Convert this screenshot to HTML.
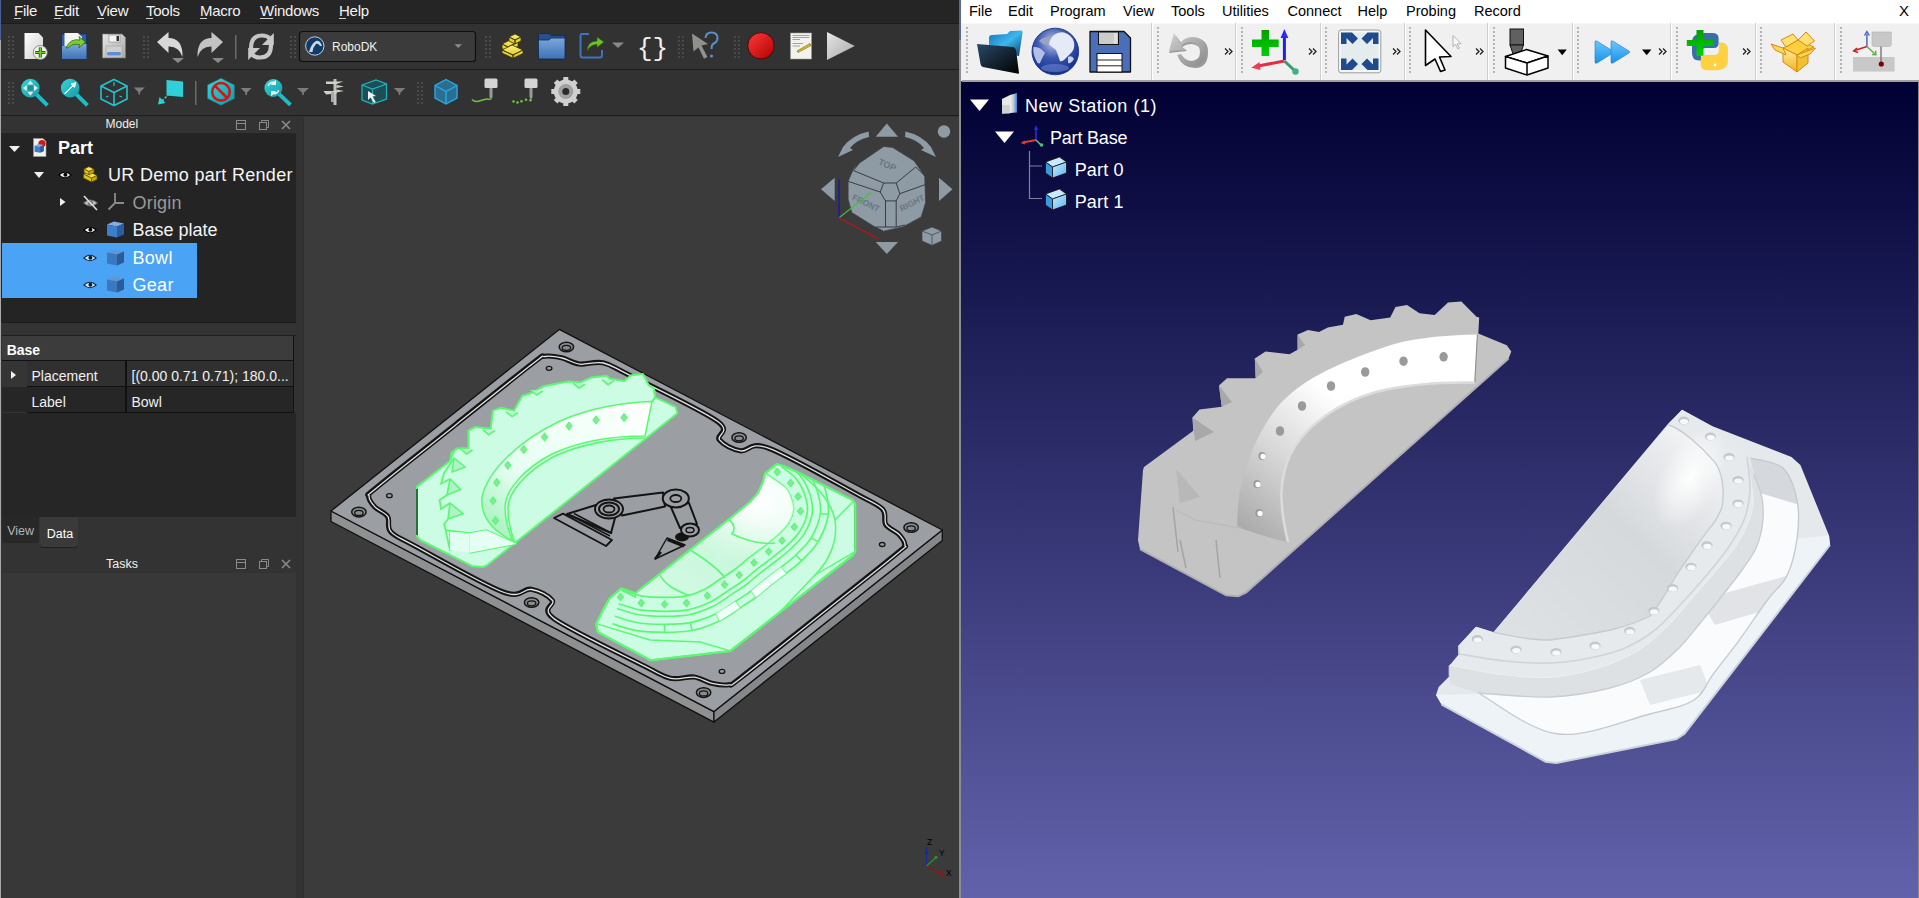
<!DOCTYPE html>
<html><head><meta charset="utf-8"><style>
html,body{margin:0;padding:0}
body{width:1919px;height:898px;overflow:hidden;position:relative;background:#3b3b3b;font-family:"Liberation Sans", sans-serif}
.t{position:absolute;line-height:1;white-space:pre}
.r{position:absolute}
svg{position:absolute;overflow:visible}
</style></head><body>
<div class="r" style="left:0px;top:0px;width:960px;height:898px;background:#3b3b3b;"></div><div class="r" style="left:0px;top:0px;width:960px;height:23px;background:#252525;"></div><div class="r" style="left:0px;top:23px;width:960px;height:1px;background:#1b1b1b;"></div><div class="r" style="left:0px;top:24px;width:960px;height:45px;background:#323232;"></div><div class="r" style="left:0px;top:69px;width:960px;height:1px;background:#1d1d1d;"></div><div class="r" style="left:0px;top:70px;width:960px;height:45px;background:#323232;"></div><div class="r" style="left:0px;top:115px;width:960px;height:1px;background:#1d1d1d;"></div><div class="r" style="left:0px;top:116px;width:960px;height:1px;background:#333333;"></div><div class="t" style="left:14px;top:3.30px;font-size:15px;color:#f2f2f2;font-weight:normal;letter-spacing:-0.25px;">File</div><div class="r" style="left:14px;top:18px;width:7px;height:1px;background:#d0d0d0;"></div><div class="t" style="left:54px;top:3.30px;font-size:15px;color:#f2f2f2;font-weight:normal;letter-spacing:-0.25px;">Edit</div><div class="r" style="left:54px;top:18px;width:7px;height:1px;background:#d0d0d0;"></div><div class="t" style="left:97px;top:3.30px;font-size:15px;color:#f2f2f2;font-weight:normal;letter-spacing:-0.25px;">View</div><div class="r" style="left:97px;top:18px;width:7px;height:1px;background:#d0d0d0;"></div><div class="t" style="left:146px;top:3.30px;font-size:15px;color:#f2f2f2;font-weight:normal;letter-spacing:-0.25px;">Tools</div><div class="r" style="left:146px;top:18px;width:7px;height:1px;background:#d0d0d0;"></div><div class="t" style="left:200px;top:3.30px;font-size:15px;color:#f2f2f2;font-weight:normal;letter-spacing:-0.25px;">Macro</div><div class="r" style="left:200px;top:18px;width:7px;height:1px;background:#d0d0d0;"></div><div class="t" style="left:260px;top:3.30px;font-size:15px;color:#f2f2f2;font-weight:normal;letter-spacing:-0.25px;">Windows</div><div class="r" style="left:260px;top:18px;width:13px;height:1px;background:#d0d0d0;"></div><div class="t" style="left:339px;top:3.30px;font-size:15px;color:#f2f2f2;font-weight:normal;letter-spacing:-0.25px;">Help</div><div class="r" style="left:339px;top:18px;width:7px;height:1px;background:#d0d0d0;"></div><div class="r" style="left:8px;top:36px;width:2px;height:2px;background:#4a4a4a;"></div><div class="r" style="left:12px;top:36px;width:2px;height:2px;background:#4a4a4a;"></div><div class="r" style="left:8px;top:40px;width:2px;height:2px;background:#4a4a4a;"></div><div class="r" style="left:12px;top:40px;width:2px;height:2px;background:#4a4a4a;"></div><div class="r" style="left:8px;top:44px;width:2px;height:2px;background:#4a4a4a;"></div><div class="r" style="left:12px;top:44px;width:2px;height:2px;background:#4a4a4a;"></div><div class="r" style="left:8px;top:48px;width:2px;height:2px;background:#4a4a4a;"></div><div class="r" style="left:12px;top:48px;width:2px;height:2px;background:#4a4a4a;"></div><div class="r" style="left:8px;top:52px;width:2px;height:2px;background:#4a4a4a;"></div><div class="r" style="left:12px;top:52px;width:2px;height:2px;background:#4a4a4a;"></div><div class="r" style="left:8px;top:56px;width:2px;height:2px;background:#4a4a4a;"></div><div class="r" style="left:12px;top:56px;width:2px;height:2px;background:#4a4a4a;"></div><div class="r" style="left:143px;top:36px;width:2px;height:2px;background:#4a4a4a;"></div><div class="r" style="left:147px;top:36px;width:2px;height:2px;background:#4a4a4a;"></div><div class="r" style="left:143px;top:40px;width:2px;height:2px;background:#4a4a4a;"></div><div class="r" style="left:147px;top:40px;width:2px;height:2px;background:#4a4a4a;"></div><div class="r" style="left:143px;top:44px;width:2px;height:2px;background:#4a4a4a;"></div><div class="r" style="left:147px;top:44px;width:2px;height:2px;background:#4a4a4a;"></div><div class="r" style="left:143px;top:48px;width:2px;height:2px;background:#4a4a4a;"></div><div class="r" style="left:147px;top:48px;width:2px;height:2px;background:#4a4a4a;"></div><div class="r" style="left:143px;top:52px;width:2px;height:2px;background:#4a4a4a;"></div><div class="r" style="left:147px;top:52px;width:2px;height:2px;background:#4a4a4a;"></div><div class="r" style="left:143px;top:56px;width:2px;height:2px;background:#4a4a4a;"></div><div class="r" style="left:147px;top:56px;width:2px;height:2px;background:#4a4a4a;"></div><div class="r" style="left:290px;top:36px;width:2px;height:2px;background:#4a4a4a;"></div><div class="r" style="left:294px;top:36px;width:2px;height:2px;background:#4a4a4a;"></div><div class="r" style="left:290px;top:40px;width:2px;height:2px;background:#4a4a4a;"></div><div class="r" style="left:294px;top:40px;width:2px;height:2px;background:#4a4a4a;"></div><div class="r" style="left:290px;top:44px;width:2px;height:2px;background:#4a4a4a;"></div><div class="r" style="left:294px;top:44px;width:2px;height:2px;background:#4a4a4a;"></div><div class="r" style="left:290px;top:48px;width:2px;height:2px;background:#4a4a4a;"></div><div class="r" style="left:294px;top:48px;width:2px;height:2px;background:#4a4a4a;"></div><div class="r" style="left:290px;top:52px;width:2px;height:2px;background:#4a4a4a;"></div><div class="r" style="left:294px;top:52px;width:2px;height:2px;background:#4a4a4a;"></div><div class="r" style="left:290px;top:56px;width:2px;height:2px;background:#4a4a4a;"></div><div class="r" style="left:294px;top:56px;width:2px;height:2px;background:#4a4a4a;"></div><div class="r" style="left:8px;top:82px;width:2px;height:2px;background:#4a4a4a;"></div><div class="r" style="left:12px;top:82px;width:2px;height:2px;background:#4a4a4a;"></div><div class="r" style="left:8px;top:86px;width:2px;height:2px;background:#4a4a4a;"></div><div class="r" style="left:12px;top:86px;width:2px;height:2px;background:#4a4a4a;"></div><div class="r" style="left:8px;top:90px;width:2px;height:2px;background:#4a4a4a;"></div><div class="r" style="left:12px;top:90px;width:2px;height:2px;background:#4a4a4a;"></div><div class="r" style="left:8px;top:94px;width:2px;height:2px;background:#4a4a4a;"></div><div class="r" style="left:12px;top:94px;width:2px;height:2px;background:#4a4a4a;"></div><div class="r" style="left:8px;top:98px;width:2px;height:2px;background:#4a4a4a;"></div><div class="r" style="left:12px;top:98px;width:2px;height:2px;background:#4a4a4a;"></div><div class="r" style="left:8px;top:102px;width:2px;height:2px;background:#4a4a4a;"></div><div class="r" style="left:12px;top:102px;width:2px;height:2px;background:#4a4a4a;"></div><div class="r" style="left:417px;top:82px;width:2px;height:2px;background:#4a4a4a;"></div><div class="r" style="left:421px;top:82px;width:2px;height:2px;background:#4a4a4a;"></div><div class="r" style="left:417px;top:86px;width:2px;height:2px;background:#4a4a4a;"></div><div class="r" style="left:421px;top:86px;width:2px;height:2px;background:#4a4a4a;"></div><div class="r" style="left:417px;top:90px;width:2px;height:2px;background:#4a4a4a;"></div><div class="r" style="left:421px;top:90px;width:2px;height:2px;background:#4a4a4a;"></div><div class="r" style="left:417px;top:94px;width:2px;height:2px;background:#4a4a4a;"></div><div class="r" style="left:421px;top:94px;width:2px;height:2px;background:#4a4a4a;"></div><div class="r" style="left:417px;top:98px;width:2px;height:2px;background:#4a4a4a;"></div><div class="r" style="left:421px;top:98px;width:2px;height:2px;background:#4a4a4a;"></div><div class="r" style="left:417px;top:102px;width:2px;height:2px;background:#4a4a4a;"></div><div class="r" style="left:421px;top:102px;width:2px;height:2px;background:#4a4a4a;"></div><div class="r" style="left:485px;top:36px;width:2px;height:2px;background:#4a4a4a;"></div><div class="r" style="left:489px;top:36px;width:2px;height:2px;background:#4a4a4a;"></div><div class="r" style="left:485px;top:40px;width:2px;height:2px;background:#4a4a4a;"></div><div class="r" style="left:489px;top:40px;width:2px;height:2px;background:#4a4a4a;"></div><div class="r" style="left:485px;top:44px;width:2px;height:2px;background:#4a4a4a;"></div><div class="r" style="left:489px;top:44px;width:2px;height:2px;background:#4a4a4a;"></div><div class="r" style="left:485px;top:48px;width:2px;height:2px;background:#4a4a4a;"></div><div class="r" style="left:489px;top:48px;width:2px;height:2px;background:#4a4a4a;"></div><div class="r" style="left:485px;top:52px;width:2px;height:2px;background:#4a4a4a;"></div><div class="r" style="left:489px;top:52px;width:2px;height:2px;background:#4a4a4a;"></div><div class="r" style="left:485px;top:56px;width:2px;height:2px;background:#4a4a4a;"></div><div class="r" style="left:489px;top:56px;width:2px;height:2px;background:#4a4a4a;"></div><div class="r" style="left:678px;top:36px;width:2px;height:2px;background:#4a4a4a;"></div><div class="r" style="left:682px;top:36px;width:2px;height:2px;background:#4a4a4a;"></div><div class="r" style="left:678px;top:40px;width:2px;height:2px;background:#4a4a4a;"></div><div class="r" style="left:682px;top:40px;width:2px;height:2px;background:#4a4a4a;"></div><div class="r" style="left:678px;top:44px;width:2px;height:2px;background:#4a4a4a;"></div><div class="r" style="left:682px;top:44px;width:2px;height:2px;background:#4a4a4a;"></div><div class="r" style="left:678px;top:48px;width:2px;height:2px;background:#4a4a4a;"></div><div class="r" style="left:682px;top:48px;width:2px;height:2px;background:#4a4a4a;"></div><div class="r" style="left:678px;top:52px;width:2px;height:2px;background:#4a4a4a;"></div><div class="r" style="left:682px;top:52px;width:2px;height:2px;background:#4a4a4a;"></div><div class="r" style="left:678px;top:56px;width:2px;height:2px;background:#4a4a4a;"></div><div class="r" style="left:682px;top:56px;width:2px;height:2px;background:#4a4a4a;"></div><div class="r" style="left:734px;top:36px;width:2px;height:2px;background:#4a4a4a;"></div><div class="r" style="left:738px;top:36px;width:2px;height:2px;background:#4a4a4a;"></div><div class="r" style="left:734px;top:40px;width:2px;height:2px;background:#4a4a4a;"></div><div class="r" style="left:738px;top:40px;width:2px;height:2px;background:#4a4a4a;"></div><div class="r" style="left:734px;top:44px;width:2px;height:2px;background:#4a4a4a;"></div><div class="r" style="left:738px;top:44px;width:2px;height:2px;background:#4a4a4a;"></div><div class="r" style="left:734px;top:48px;width:2px;height:2px;background:#4a4a4a;"></div><div class="r" style="left:738px;top:48px;width:2px;height:2px;background:#4a4a4a;"></div><div class="r" style="left:734px;top:52px;width:2px;height:2px;background:#4a4a4a;"></div><div class="r" style="left:738px;top:52px;width:2px;height:2px;background:#4a4a4a;"></div><div class="r" style="left:734px;top:56px;width:2px;height:2px;background:#4a4a4a;"></div><div class="r" style="left:738px;top:56px;width:2px;height:2px;background:#4a4a4a;"></div><svg style="left:0;top:0" width="960" height="117" viewBox="0 0 960 117">
<defs>
<linearGradient id="gPage" x1="0" y1="0" x2="1" y2="1"><stop offset="0" stop-color="#ffffff"/><stop offset="1" stop-color="#cfcfcf"/></linearGradient>
<linearGradient id="gBlue" x1="0" y1="0" x2="0" y2="1"><stop offset="0" stop-color="#7aa7dc"/><stop offset="1" stop-color="#3f72b5"/></linearGradient>
<linearGradient id="gGray" x1="0" y1="0" x2="1" y2="1"><stop offset="0" stop-color="#e6e6e6"/><stop offset="1" stop-color="#a8a8a8"/></linearGradient>
<linearGradient id="gRed" x1="0" y1="0" x2="1" y2="1"><stop offset="0" stop-color="#ff3a3a"/><stop offset="1" stop-color="#b00000"/></linearGradient>
<linearGradient id="gCyan" x1="0" y1="0" x2="1" y2="1"><stop offset="0" stop-color="#38d6dc"/><stop offset="1" stop-color="#139aa6"/></linearGradient>
<linearGradient id="gYel" x1="0" y1="0" x2="0" y2="1"><stop offset="0" stop-color="#fff27a"/><stop offset="1" stop-color="#d8c020"/></linearGradient>
</defs>
<!-- new doc -->
<path d="M24.5 33 H38.5 L43 37.5 V59 H24.5 Z" fill="url(#gPage)"/>
<circle cx="40.3" cy="52.5" r="7" fill="#f0f0f0" stroke="#777" stroke-width="0.8"/>
<path d="M40.3 47.5 V57.5 M35.3 52.5 H45.3" stroke="#1d4000" stroke-width="3"/>
<path d="M40.3 47.5 V57.5 M35.3 52.5 H45.3" stroke="#6fd12a" stroke-width="1.6"/>
<!-- open -->
<rect x="61.5" y="34" width="25" height="25" fill="#2f5fa8" stroke="#12305a" stroke-width="0.8"/>
<path d="M64.5 33 H78 L82 37 V47 H64.5 Z" fill="#f4f4f4"/>
<path d="M62 46 H71 L73 44 H86.5 V59 H62 Z" fill="url(#gBlue)"/>
<path d="M66 48 Q70 38 80 40 L79 36.5 L85.5 42 L79 48 L79.5 44.5 Q72 43 68 48 Z" fill="#7ccf2a" stroke="#2a5a00" stroke-width="0.7"/>
<!-- save -->
<path d="M102.5 34 H122 L125.5 37.5 V58 H102.5 Z" fill="url(#gGray)" stroke="#777" stroke-width="0.6"/>
<rect x="109" y="35" width="11" height="7" fill="#f4f4f4" stroke="#888" stroke-width="0.6"/>
<rect x="116.5" y="36" width="2.5" height="5" fill="#333"/>
<rect x="106" y="46" width="16" height="11" fill="#cfcfcf" stroke="#999" stroke-width="0.5"/>
<rect x="107" y="52" width="14" height="3.5" rx="1.5" fill="#5a8fd0"/>
<!-- undo -->
<path d="M157 42 L168.5 32 V38 Q183 38 182.5 57 Q179 46 168.5 46.5 V53 Z" fill="#d8d8d8"/>
<path d="M172 58 H184 L178 63 Z" fill="#8a8a8a"/>
<!-- redo -->
<path d="M223 42 L211.5 32 V38 Q197 38 197.5 57 Q201 46 211.5 46.5 V53 Z" fill="#c4c4c4"/>
<path d="M212 58 H224 L218 63 Z" fill="#8a8a8a"/>
<rect x="235" y="35" width="1.5" height="24" fill="#6a6a6a"/>
<!-- refresh -->
<path d="M251 48 Q251 35.5 262 35.5 Q267 35.5 270 38.5" fill="none" stroke="#c4c4c4" stroke-width="4.2"/>
<path d="M273.8 33 V45 H262 Z" fill="#c8c8c8"/>
<path d="M271 45 Q271 57.5 260 57.5 Q255 57.5 252 54.5" fill="none" stroke="#c8c8c8" stroke-width="4.2"/>
<path d="M248.2 60 V48 H260 Z" fill="#c8c8c8"/>
<!-- combo -->
<rect x="299.5" y="31.5" width="176" height="30" rx="3" fill="#3b3b3b" stroke="#0e0e0e" stroke-width="1.2"/>
<circle cx="314.8" cy="46" r="9.2" fill="#0f3c6a" stroke="#d8dde6" stroke-width="0.9"/>
<path d="M309 52 Q311 44 316 41 Q320 40 322 46 L320 46 Q318 43 316 44 Q313 47 312.5 52 Z" fill="#d0d6de"/>
<path d="M454.5 44.3 H462 L458.2 48 Z" fill="#8c8c8c"/>
<!-- yellow blocks -->
<path d="M502 44 L512 39 L518 42 L508 47 Z M508 47 V51.5 L502 48.5 V44 Z M508 47 L518 42 V46.5 L508 51.5 Z" fill="url(#gYel)" stroke="#3b3200" stroke-width="0.8"/>
<path d="M509 37 L515 34 L521 37 L515 40 Z M515 40 V44 L509 41 V37 Z M515 40 L521 37 V41 L515 44 Z" fill="url(#gYel)" stroke="#3b3200" stroke-width="0.8"/>
<path d="M502 50 L512 45 L523 50 L513 55 Z M513 55 V58.3 L502 53 V50 Z M513 55 L523 50 V53.5 L513 58.3 Z" fill="url(#gYel)" stroke="#3b3200" stroke-width="0.8"/>
<!-- folder -->
<path d="M538.5 33.5 H549 L551 35.5 H565 V59 H538.5 Z" fill="#26508f" stroke="#0f2a55" stroke-width="0.8"/>
<path d="M538.5 40 H549 L551 38 H565 V59 H538.5 Z" fill="url(#gBlue)" stroke="#0f2a55" stroke-width="0.8"/>
<!-- share -->
<path d="M589 34 H582 Q580.5 34 580.5 36 V55.5 Q580.5 57.5 582.5 57.5 H600 Q602 57.5 602 55.5 V50" fill="none" stroke="#3f74bd" stroke-width="2"/>
<path d="M587.5 51 Q587 41 597 41 L597 37 L604 42 L597 47.5 L597 44.5 Q590 44.5 587.5 51 Z" fill="#6cc02a" stroke="#2a5a00" stroke-width="0.6"/>
<path d="M612 42.4 H624 L618 48 Z" fill="#8a8a8a"/>
<!-- braces -->
<text x="637" y="56" font-family="Liberation Mono" font-size="26" fill="#f0f0f0">{}</text>
<!-- whats this -->
<path d="M692 33.5 L708 44 L701.5 45.5 L707.5 57 L704 58.7 L698.5 47.5 L693.5 51.5 Z" fill="#8e918c"/>
<path d="M705.5 38 Q706 32.5 711.5 32.5 Q717.5 32.5 717.5 38 Q717.5 42 713 44 Q711.5 45 711.5 49" fill="none" stroke="#5a8fd0" stroke-width="2"/>
<circle cx="711.5" cy="56" r="1.6" fill="#5a8fd0"/>
<!-- record -->
<circle cx="761" cy="45.8" r="13.2" fill="url(#gRed)" stroke="#3a0000" stroke-width="0.8"/>
<!-- macro doc -->
<rect x="790.5" y="33" width="21" height="26" fill="#f2f2ee" stroke="#999" stroke-width="0.6"/>
<path d="M792.5 35.5 H809.5 M792.5 37.5 H809.5 M792.5 39.5 H800 M792.5 43.5 H803 M792.5 46 H800" stroke="#9a9a9a" stroke-width="0.9"/>
<path d="M797 51 L810 43.5 L811 45.5 L798 52.5 Z" fill="#e0c020" stroke="#5a4a00" stroke-width="0.5"/>
<!-- play -->
<path d="M827 32 L854.8 46 L827 60 Z" fill="url(#gGray)"/>
<!-- ROW 2 -->
<!-- zoom fit -->
<path d="M37 95 L46 104" stroke="#1fbcc4" stroke-width="4" stroke-linecap="square"/>
<circle cx="30.4" cy="88.1" r="9.3" fill="url(#gCyan)"/>
<path d="M30.4 80.5 L33.5 84.5 H27.3 Z M30.4 95.7 L33.5 91.7 H27.3 Z M22.8 88.1 L26.8 85 V91.2 Z M38 88.1 L34 85 V91.2 Z" fill="#e8e8e8"/>
<rect x="28" y="85.7" width="4.8" height="4.8" fill="#1a8f99"/>
<!-- zoom sel -->
<path d="M77 95 L86 104" stroke="#1fbcc4" stroke-width="4" stroke-linecap="square"/>
<circle cx="70.2" cy="88.1" r="9.3" fill="url(#gCyan)"/>
<path d="M65 94 L73 86 L71 84 L76 82.5 L74.5 87.5 L72.5 85.5 L64.5 93.5 Z" fill="#eeeeee" stroke="#eee" stroke-width="1"/>
<!-- iso cube -->
<path d="M114 79.5 L127 86 V99 L114 105.5 L101 99 V86 Z M101 86 L114 92.5 L127 86 M114 92.5 V105.5" fill="none" stroke="#22c4cc" stroke-width="1.6"/>
<path d="M114 82 V86 M106 97 L108.5 96 M119.5 96 L122 97" stroke="#22c4cc" stroke-width="1.2"/>
<path d="M133.8 87.6 H144.7 L139.2 93 Z" fill="#7c7c7c"/><rect x="138.4" y="92" width="1.6" height="2.5" fill="#7c7c7c"/>
<!-- measure plane -->
<path d="M166.5 80 L183 81.5 V97 L166.5 95.5 Z" fill="#2fd0d8"/>
<path d="M175 88 L161 102" stroke="#2fd0d8" stroke-width="1.6" stroke-dasharray="2.5 1.5"/>
<path d="M158 104.5 L159.5 97 L165.5 103 Z" fill="#2fd0d8"/>
<rect x="195" y="81" width="1.5" height="24" fill="#6a6a6a"/>
<!-- draw style -->
<path d="M221 78.3 L234.4 85 V98.5 L221 105.3 L207.5 98.5 V85 Z" fill="url(#gCyan)" stroke="#0f7a84" stroke-width="0.6"/>
<circle cx="221" cy="91.8" r="8.8" fill="none" stroke="#d41515" stroke-width="2.6"/>
<path d="M214.8 85.6 L227.2 98" stroke="#d41515" stroke-width="2.6"/>
<path d="M240.7 88 H251.6 L246.2 93.5 Z" fill="#7c7c7c"/><rect x="245.4" y="92.5" width="1.6" height="2.5" fill="#7c7c7c"/>
<!-- zoom sync -->
<path d="M280 95 L289 103.5" stroke="#1fbcc4" stroke-width="4" stroke-linecap="square"/>
<circle cx="273.4" cy="88" r="9" fill="url(#gCyan)"/>
<path d="M267.5 86 Q269 81 274 81.5 L276 79.5 V85 H270.5 L272.5 83.5 Q269.5 83.5 269 86 Z M279.3 90 Q278 95 273 94.5 L271 96.5 V91 H276.5 L274.5 92.5 Q277.5 92.5 278 90 Z" fill="#eeeeee"/>
<path d="M297 88 H309 L303 93.5 Z" fill="#7c7c7c"/><rect x="302.2" y="92.5" width="1.6" height="2.5" fill="#7c7c7c"/>
<!-- caliper -->
<path d="M333.5 79 H336.5 V105 H333.5 Z" fill="#bfc2bb"/>
<path d="M326 81.5 H343.5 L336.5 84 H326 Z M323.5 91 H336.5 V93.5 L326 94.5 Z M336.5 85 L344 86.5 L336.5 88 Z M336.5 89.5 L344 91 L336.5 92.5 Z" fill="#cfd2cb"/>
<rect x="331" y="92" width="3" height="10" fill="#a8aba5"/>
<!-- cube cursor -->
<path d="M362 85 L376 80 L386.5 84 V99 L372.5 104 L362 100 Z" fill="#1d4e55" stroke="#22b4bc" stroke-width="1.2"/>
<path d="M362 85 L372.5 89 L386.5 84 M372.5 89 V104" fill="none" stroke="#22b4bc" stroke-width="1.2"/>
<path d="M368 91 L368 100 L370.5 97.5 L374 103 L375.8 102 L372.5 96.5 L376 96 Z" fill="#f0f0f0"/>
<path d="M393.8 88 H405.3 L399.5 93.5 Z" fill="#7c7c7c"/><rect x="398.7" y="92.5" width="1.6" height="2.5" fill="#7c7c7c"/>
<!-- blue cube -->
<path d="M446 79.5 L457 85.5 V98 L446 104 L435 98 V85.5 Z" fill="#2a6f92" stroke="#2aa8e8" stroke-width="1.4"/>
<path d="M435 85.5 L446 91.5 L457 85.5 M446 91.5 V104" fill="none" stroke="#2aa8e8" stroke-width="1.4"/>
<!-- path tool 1 -->
<rect x="484.5" y="78.5" width="13" height="9.5" rx="1.5" fill="#d4d4d4"/>
<path d="M489.5 88 H492.5 V97 L491 100 L489.5 97 Z" fill="#9a9a9a"/>
<path d="M472 99.5 Q475 103 481 100.5 Q487 98 490.5 99.5" fill="none" stroke="#6cc63a" stroke-width="1.4"/>
<!-- path tool 2 -->
<rect x="524.5" y="78.5" width="13" height="9.5" rx="1.5" fill="#d4d4d4"/>
<path d="M529.5 88 H532.5 V97 L531 100 L529.5 97 Z" fill="#9a9a9a"/>
<circle cx="513.5" cy="101.5" r="1.3" fill="#6cc63a"/><circle cx="517.5" cy="102.5" r="1.3" fill="#6cc63a"/><circle cx="521.5" cy="101.3" r="1.3" fill="#6cc63a"/><circle cx="526" cy="99.8" r="1.3" fill="#6cc63a"/><circle cx="530.5" cy="100.2" r="1.3" fill="#6cc63a"/>
<!-- gear -->
<g transform="translate(565.8 91.5)">
<circle r="12" fill="#d0d0d0"/>
<g fill="#d0d0d0"><rect x="-2.5" y="-14.5" width="5" height="29"/><rect x="-14.5" y="-2.5" width="29" height="5"/><rect x="-2.5" y="-14.5" width="5" height="29" transform="rotate(45)"/><rect x="-2.5" y="-14.5" width="5" height="29" transform="rotate(-45)"/></g>
<circle r="7.5" fill="#a0a0a0"/><circle r="3.5" fill="#2b2b2b"/>
</g>
</svg><div class="t" style="left:332px;top:40.84px;font-size:12px;color:#f0f0f0;font-weight:normal;letter-spacing:0px;">RoboDK</div><div class="r" style="left:0px;top:117px;width:296px;height:781px;background:#333333;"></div><div class="r" style="left:1px;top:117px;width:295px;height:16px;background:#333333;"></div><div class="t" style="left:105.5px;top:118.34px;font-size:12px;color:#f0f0f0;font-weight:normal;letter-spacing:0px;">Model</div><svg style="left:230px;top:117px" width="66" height="16"><rect x="6.5" y="3.5" width="9" height="9" fill="none" stroke="#8a8a8a"/><path d="M6.5 6.5 H15.5" stroke="#8a8a8a"/><rect x="29.5" y="5.5" width="7" height="7" fill="none" stroke="#8a8a8a"/><path d="M31.5 5.5 V3.5 H38.5 V10.5 H36.5" fill="none" stroke="#8a8a8a"/><path d="M52 4 L60 12 M60 4 L52 12" stroke="#8a8a8a" stroke-width="1.6"/></svg><div class="r" style="left:1px;top:133px;width:295px;height:189px;background:#242424;"></div><div class="r" style="left:2px;top:243px;width:195px;height:55px;background:#4aa3f5;"></div><div class="t" style="left:58px;top:139.26px;font-size:18px;color:#ffffff;font-weight:bold;letter-spacing:0px;">Part</div><div class="t" style="left:108px;top:166.26px;font-size:18px;color:#f4f4f4;font-weight:normal;letter-spacing:0.3px;">UR Demo part Render</div><div class="t" style="left:132.5px;top:193.76px;font-size:18px;color:#9a9a9a;font-weight:normal;letter-spacing:0.2px;">Origin</div><div class="t" style="left:132.5px;top:221.26px;font-size:18px;color:#f4f4f4;font-weight:normal;letter-spacing:0px;">Base plate</div><div class="t" style="left:132.5px;top:248.76px;font-size:18px;color:#ffffff;font-weight:normal;letter-spacing:0.3px;">Bowl</div><div class="t" style="left:132.5px;top:276.26px;font-size:18px;color:#ffffff;font-weight:normal;letter-spacing:0.3px;">Gear</div><div class="r" style="left:2px;top:322px;width:294px;height:1px;background:#1c1c1c;"></div><div class="r" style="left:2px;top:323px;width:294px;height:12px;background:#333333;"></div><div class="r" style="left:2px;top:335px;width:294px;height:1px;background:#1e1e1e;"></div><div class="r" style="left:2px;top:336px;width:292px;height:24px;background:#3c3c3c;"></div><div class="r" style="left:293px;top:336px;width:1px;height:77px;background:#111;"></div><div class="t" style="left:6.7px;top:343.15px;font-size:14px;color:#ffffff;font-weight:bold;letter-spacing:0px;">Base</div><div class="r" style="left:2px;top:360px;width:292px;height:1px;background:#111;"></div><div class="r" style="left:2px;top:361px;width:291px;height:25px;background:#303030;"></div><div class="r" style="left:2px;top:361px;width:25px;height:26px;background:#353535;"></div><div class="r" style="left:27px;top:386px;width:266px;height:1px;background:#111;"></div><div class="r" style="left:2px;top:387px;width:291px;height:25px;background:#262626;"></div><div class="r" style="left:27px;top:412px;width:266px;height:1px;background:#111;"></div><div class="r" style="left:125px;top:361px;width:2px;height:51px;background:#111;"></div><div class="t" style="left:31.5px;top:369.15px;font-size:14px;color:#f0f0f0;font-weight:normal;letter-spacing:0px;">Placement</div><div class="t" style="left:131.5px;top:369.15px;font-size:14px;color:#f0f0f0;font-weight:normal;letter-spacing:0px;">[(0.00 0.71 0.71); 180.0...</div><div class="t" style="left:31.5px;top:394.65px;font-size:14px;color:#f0f0f0;font-weight:normal;letter-spacing:0px;">Label</div><div class="t" style="left:131.5px;top:394.65px;font-size:14px;color:#f0f0f0;font-weight:normal;letter-spacing:0px;">Bowl</div><svg style="left:0;top:130px" width="80" height="260"><path d="M9 16 H20 L14.5 22 Z" fill="#f0f0f0"/><path d="M34 42 H44 L39 48 Z" fill="#f0f0f0"/><path d="M60 68 V76 L65.5 72 Z" fill="#f0f0f0"/><path d="M11 241 V249 L16 245 Z" fill="#f0f0f0"/></svg><div class="r" style="left:2px;top:413px;width:294px;height:104px;background:#262626;"></div><div class="r" style="left:2px;top:517px;width:294px;height:56px;background:#333333;"></div><div class="r" style="left:2px;top:517px;width:37px;height:26px;background:#282828;border-radius:0 0 3px 3px"></div><div class="r" style="left:40px;top:517px;width:38px;height:30px;background:#3a3a3a;border-radius:0 0 3px 3px;box-shadow:0 1px 0 #1e1e1e"></div><div class="t" style="left:7.2px;top:525.42px;font-size:12.5px;color:#b4b4b4;font-weight:normal;letter-spacing:0px;">View</div><div class="t" style="left:46.8px;top:528.42px;font-size:12.5px;color:#ffffff;font-weight:normal;letter-spacing:0px;">Data</div><div class="t" style="left:106px;top:558.42px;font-size:12.5px;color:#f0f0f0;font-weight:normal;letter-spacing:0px;">Tasks</div><svg style="left:230px;top:556px" width="66" height="16"><rect x="6.5" y="3.5" width="9" height="9" fill="none" stroke="#8a8a8a"/><path d="M6.5 6.5 H15.5" stroke="#8a8a8a"/><rect x="29.5" y="5.5" width="7" height="7" fill="none" stroke="#8a8a8a"/><path d="M31.5 5.5 V3.5 H38.5 V10.5 H36.5" fill="none" stroke="#8a8a8a"/><path d="M52 4 L60 12 M60 4 L52 12" stroke="#8a8a8a" stroke-width="1.6"/></svg><div class="r" style="left:2px;top:573px;width:294px;height:325px;background:#383838;"></div><div class="r" style="left:296px;top:117px;width:7px;height:781px;background:#333333;"></div><div class="r" style="left:303px;top:117px;width:1px;height:781px;background:#2f2f2f;"></div><div class="r" style="left:0px;top:0px;width:1px;height:898px;background:#a8a8a8;"></div><div class="r" style="left:0px;top:0px;width:1px;height:40px;background:#4a6090;"></div><svg style="left:0;top:0" width="300" height="320"><path d="M33.5 138.5 H43 L46 141.5 V156.5 H33.5 Z" fill="#f0f0f0" stroke="#9a9a9a" stroke-width="0.6"/><circle cx="42" cy="143.5" r="3.6" fill="#e01010"/><g transform="translate(34 144) scale(0.55)"><path d="M1 3 L8 0 L18 2 L11 5 Z" fill="#7fb0e6"/><path d="M1 3 L11 5 V16 L1 14 Z" fill="#3d7fc8"/><path d="M11 5 L18 2 V13 L11 16 Z" fill="#2a5f9f"/></g><g stroke="#5a4a00" stroke-width="0.6"><path d="M83.5 174 L89 171.5 L97 175.5 L91.5 178 Z" fill="#f4e040"/><path d="M83.5 174 L91.5 178 V182 L83.5 178 Z" fill="#d8c020"/><path d="M91.5 178 L97 175.5 V179.5 L91.5 182 Z" fill="#c0a810"/><path d="M84 169 L89 166.7 L94 169.2 L89 171.5 Z" fill="#f8e850"/><path d="M84 169 L89 171.5 V175 L84 172.5 Z" fill="#d8c020"/><path d="M89 171.5 L94 169.2 V172.5 L89 175 Z" fill="#c0a810"/></g><path d="M58 175 Q65 168.5 72 175 Q65 181.5 58 175 Z" fill="#000000"/><path d="M59.8 175 Q65 170.6 70.2 175 Q65 179.4 59.8 175 Z" fill="#f2f2f2"/><circle cx="65.4" cy="174.8" r="2" fill="#000000"/><path d="M83.5 203 Q90.5 197 97.5 203 Q90.5 209 83.5 203 Z" fill="#bdbdbd" stroke="#6a6a6a" stroke-width="1"/><circle cx="90.5" cy="203" r="2.6" fill="#777"/><path d="M84 196 L97 210" stroke="#e0e0e0" stroke-width="1.6"/><path d="M115 193 V203 M115 203 H124 M115 203 L108.5 209.5" stroke="#8a8a8a" stroke-width="1.8" fill="none"/><path d="M83 230 Q90 223.5 97 230 Q90 236.5 83 230 Z" fill="#000000"/><path d="M84.8 230 Q90 225.6 95.2 230 Q90 234.4 84.8 230 Z" fill="#f2f2f2"/><circle cx="90.4" cy="229.8" r="2" fill="#000000"/><path d="M107 224.5 L114 221.5 L124 223.5 L117 226.5 Z" fill="#7fb0e6"/><path d="M107 224.5 L117 226.5 V237.5 L107 235.5 Z" fill="#3d7fc8"/><path d="M117 226.5 L124 223.5 V234.5 L117 237.5 Z" fill="#2a5f9f"/><path d="M83 258 Q90 251.5 97 258 Q90 264.5 83 258 Z" fill="#0a2038"/><path d="M84.8 258 Q90 253.6 95.2 258 Q90 262.4 84.8 258 Z" fill="#d8ecff"/><circle cx="90.4" cy="257.8" r="2" fill="#0a2038"/><path d="M107 252.5 L114 249.5 L124 251.5 L117 254.5 Z" fill="#5f95d0"/><path d="M107 252.5 L117 254.5 V265.5 L107 263.5 Z" fill="#3a78c0"/><path d="M117 254.5 L124 251.5 V262.5 L117 265.5 Z" fill="#2a5c98"/><path d="M83 285 Q90 278.5 97 285 Q90 291.5 83 285 Z" fill="#0a2038"/><path d="M84.8 285 Q90 280.6 95.2 285 Q90 289.4 84.8 285 Z" fill="#d8ecff"/><circle cx="90.4" cy="284.8" r="2" fill="#0a2038"/><path d="M107 279.5 L114 276.5 L124 278.5 L117 281.5 Z" fill="#5f95d0"/><path d="M107 279.5 L117 281.5 V292.5 L107 290.5 Z" fill="#3a78c0"/><path d="M117 281.5 L124 278.5 V289.5 L117 292.5 Z" fill="#2a5c98"/></svg><div class="r" style="left:304px;top:117px;width:656px;height:781px;background:#3b3b3b;"></div><svg style="left:0;top:0" width="960" height="898" viewBox="0 0 960 898"><polygon points="331.0,511.0 714.0,711.6 714.0,722.1 331.0,521.5" fill="#8f9092" stroke="#111" stroke-width="1.3" stroke-linejoin="round"/><polygon points="714.0,711.6 942.3,530.0 942.3,540.5 714.0,722.1" fill="#85878a" stroke="#111" stroke-width="1.3" stroke-linejoin="round"/><polygon points="559.3,329.4 942.3,530.0 714.0,711.6 331.0,511.0" fill="#9b9ea2" stroke="#111" stroke-width="1.3" stroke-linejoin="round"/><path d="M629.1 375.0 C648.1 384.7 702.1 410.3 717.1 421.1 C732.2 431.9 715.4 434.7 719.2 439.7 C723.1 444.6 732.0 449.3 740.3 450.7 C748.6 452.1 749.1 440.7 768.8 448.2 C788.6 455.6 839.9 485.1 858.9 495.3 C877.8 505.5 878.1 504.4 882.6 509.3 C887.1 514.1 883.0 520.3 885.7 524.5 C888.4 528.6 895.6 530.9 898.8 534.3 C901.9 537.7 905.0 541.6 904.6 544.9 C904.1 548.2 910.5 542.2 896.2 554.0 C881.9 565.9 844.4 595.2 818.6 615.8 C792.7 636.4 755.9 666.0 741.0 677.5 C726.0 689.0 733.7 683.7 728.8 684.7 C723.9 685.6 717.4 684.5 711.6 683.2 C705.8 681.9 700.8 677.9 694.0 677.0 C687.1 676.2 678.6 680.0 670.3 678.2 C662.0 676.3 663.6 675.9 644.2 666.0 C624.9 656.2 569.6 629.8 554.2 618.9 C538.9 607.9 556.0 605.3 552.2 600.3 C548.3 595.4 539.4 590.7 531.1 589.3 C522.8 587.9 522.0 599.1 502.5 591.8 C483.1 584.5 433.1 555.7 414.4 545.7 C395.8 535.7 395.2 536.6 390.7 531.7 C386.2 526.9 390.3 520.7 387.6 516.5 C384.9 512.4 377.7 510.1 374.5 506.7 C371.4 503.3 368.3 499.4 368.7 496.1 C369.2 492.8 362.8 498.8 377.1 487.0 C391.4 475.1 428.9 445.8 454.7 425.2 C480.6 404.6 517.4 375.0 532.3 363.5 C547.3 352.0 539.6 357.3 544.5 356.3 C549.4 355.4 555.9 356.5 561.7 357.8 C567.5 359.1 572.5 363.1 579.3 364.0 C586.2 364.8 594.7 361.0 603.0 362.8 C611.3 364.7 610.0 365.3 629.1 375.0 Z" fill="none" stroke="#151515" stroke-width="5.2" stroke-linejoin="round"/><path d="M629.1 375.0 C648.1 384.7 702.1 410.3 717.1 421.1 C732.2 431.9 715.4 434.7 719.2 439.7 C723.1 444.6 732.0 449.3 740.3 450.7 C748.6 452.1 749.1 440.7 768.8 448.2 C788.6 455.6 839.9 485.1 858.9 495.3 C877.8 505.5 878.1 504.4 882.6 509.3 C887.1 514.1 883.0 520.3 885.7 524.5 C888.4 528.6 895.6 530.9 898.8 534.3 C901.9 537.7 905.0 541.6 904.6 544.9 C904.1 548.2 910.5 542.2 896.2 554.0 C881.9 565.9 844.4 595.2 818.6 615.8 C792.7 636.4 755.9 666.0 741.0 677.5 C726.0 689.0 733.7 683.7 728.8 684.7 C723.9 685.6 717.4 684.5 711.6 683.2 C705.8 681.9 700.8 677.9 694.0 677.0 C687.1 676.2 678.6 680.0 670.3 678.2 C662.0 676.3 663.6 675.9 644.2 666.0 C624.9 656.2 569.6 629.8 554.2 618.9 C538.9 607.9 556.0 605.3 552.2 600.3 C548.3 595.4 539.4 590.7 531.1 589.3 C522.8 587.9 522.0 599.1 502.5 591.8 C483.1 584.5 433.1 555.7 414.4 545.7 C395.8 535.7 395.2 536.6 390.7 531.7 C386.2 526.9 390.3 520.7 387.6 516.5 C384.9 512.4 377.7 510.1 374.5 506.7 C371.4 503.3 368.3 499.4 368.7 496.1 C369.2 492.8 362.8 498.8 377.1 487.0 C391.4 475.1 428.9 445.8 454.7 425.2 C480.6 404.6 517.4 375.0 532.3 363.5 C547.3 352.0 539.6 357.3 544.5 356.3 C549.4 355.4 555.9 356.5 561.7 357.8 C567.5 359.1 572.5 363.1 579.3 364.0 C586.2 364.8 594.7 361.0 603.0 362.8 C611.3 364.7 610.0 365.3 629.1 375.0 Z" fill="none" stroke="#e4e4e4" stroke-width="1.3" stroke-linejoin="round" transform="translate(0.4 0.2)"/><ellipse cx="566.4" cy="347.0" rx="7.2" ry="4.8" fill="#8a8b8d" stroke="#151515" stroke-width="1.5"/><ellipse cx="566.4" cy="347.8" rx="4.2" ry="2.5" fill="none" stroke="#151515" stroke-width="1.3"/><ellipse cx="358.9" cy="512.1" rx="7.2" ry="4.8" fill="#8a8b8d" stroke="#151515" stroke-width="1.5"/><ellipse cx="358.9" cy="512.9" rx="4.2" ry="2.5" fill="none" stroke="#151515" stroke-width="1.3"/><ellipse cx="739.1" cy="437.5" rx="7.2" ry="4.8" fill="#8a8b8d" stroke="#151515" stroke-width="1.5"/><ellipse cx="739.1" cy="438.3" rx="4.2" ry="2.5" fill="none" stroke="#151515" stroke-width="1.3"/><ellipse cx="531.6" cy="602.5" rx="7.2" ry="4.8" fill="#8a8b8d" stroke="#151515" stroke-width="1.5"/><ellipse cx="531.6" cy="603.3" rx="4.2" ry="2.5" fill="none" stroke="#151515" stroke-width="1.3"/><ellipse cx="911.1" cy="527.5" rx="7.2" ry="4.8" fill="#8a8b8d" stroke="#151515" stroke-width="1.5"/><ellipse cx="911.1" cy="528.3" rx="4.2" ry="2.5" fill="none" stroke="#151515" stroke-width="1.3"/><ellipse cx="703.6" cy="692.6" rx="7.2" ry="4.8" fill="#8a8b8d" stroke="#151515" stroke-width="1.5"/><ellipse cx="703.6" cy="693.4" rx="4.2" ry="2.5" fill="none" stroke="#151515" stroke-width="1.3"/><ellipse cx="549.1" cy="368.3" rx="2.8" ry="2" fill="none" stroke="#151515" stroke-width="1.3"/><ellipse cx="389.4" cy="495.7" rx="2.8" ry="2" fill="none" stroke="#151515" stroke-width="1.3"/><ellipse cx="882.2" cy="544.5" rx="2.8" ry="2" fill="none" stroke="#151515" stroke-width="1.3"/><ellipse cx="722.0" cy="671.4" rx="2.8" ry="2" fill="none" stroke="#151515" stroke-width="1.3"/><g fill="none" stroke="#141414" stroke-width="2" stroke-linejoin="round"><path d="M554 518 L563 513.6 L612 540 L606 546 Z" stroke-width="1.8"/><path d="M567 514 L596 505 L615 518 L611 533 Z" fill="#9b9ea2"/><path d="M571 515.5 L610 536 M574 513.5 L612 533.5" stroke-width="1.5"/><path d="M614 498.5 L663 492.5 L665 506.6 L622 515.6 Z" fill="#9b9ea2"/><path d="M670 505 L680 528 L697 524 L689 503 Z" fill="#9b9ea2"/><ellipse cx="609" cy="509" rx="14" ry="9.5" fill="#9b9ea2" stroke-width="2"/><ellipse cx="609" cy="509" rx="10" ry="6.5"/><ellipse cx="609" cy="509" rx="5.5" ry="3.5" stroke-width="1.8"/><ellipse cx="675.8" cy="498.5" rx="13" ry="9" fill="#9b9ea2" stroke-width="2"/><ellipse cx="675.8" cy="498.5" rx="5.5" ry="3.5" stroke-width="1.8"/><path d="M667 538 L685 545 L655 559 Z" fill="#9b9ea2" stroke-width="1.4"/><ellipse cx="682" cy="537" rx="6" ry="3.5" fill="#141414"/><path d="M667.5 539.5 L684 546" stroke-width="3"/><path d="M661 552 L655 559" stroke-width="2.5"/><ellipse cx="690" cy="530" rx="9" ry="6.5" fill="#9b9ea2" stroke-width="2"/><ellipse cx="690" cy="530" rx="4" ry="2.6" stroke-width="1.5"/></g><defs><linearGradient id="band" x1="0" y1="1" x2="1" y2="0"><stop offset="0" stop-color="#9aeeb6"/><stop offset="0.35" stop-color="#e6fff2"/><stop offset="1" stop-color="#ffffff"/></linearGradient><linearGradient id="bowlin" x1="0" y1="1" x2="1" y2="0"><stop offset="0" stop-color="#d6fbe6"/><stop offset="0.6" stop-color="#c6f6da"/><stop offset="1" stop-color="#f4fffa"/></linearGradient></defs><path d="M417.0 486.6 L450.0 461.0 L451.5 452.7 L456.8 448.6 L468.5 448.0 L468.5 430.5 L475.5 427.0 L490.7 428.7 L493.0 410.6 L501.2 407.7 L514.0 410.6 L522.2 396.0 L532.8 392.5 L538.6 389.0 L544.5 386.0 L556.0 383.7 L568.0 381.6 L581.0 382.2 L591.4 377.5 L606.6 375.8 L610.0 378.7 L624.2 381.0 L631.2 375.2 L643.0 374.0 L648.7 385.1 L654.0 388.6 L655.2 397.4 L675.6 406.8 L677.4 413.2 L487.7 564.8 L483.2 567.0 L472.7 566.3 L420.0 540.0 L417.0 536.2 Z" fill="#cdfce4" stroke="#5cf872" stroke-width="2" stroke-linejoin="round"/><path d="M417 489 V535" stroke="#111" stroke-width="1.2"/><g fill="#b0f2c8" stroke="#5cf872" stroke-width="1.6" stroke-linejoin="round"><path d="M454 458 L465.2 467 L452 472 Z"/><path d="M450 479 L460.6 489.6 L447 495 Z"/><path d="M450 503 L463 513.7 L448 519 Z"/></g><path d="M450.1 461 L454.6 449.8 M454 458 L444.1 473 L441 483.6 L450 479 M447 495 L439.6 500 L441 509 L450 503 M448 519 L444.1 524.2 L445.6 530.2 L450 550" fill="none" stroke="#5cf872" stroke-width="1.7"/><path d="M445.6 530.2 L469.7 533.2 L486.2 530.2 L516.3 543.8 M450 531.7 V551 M469.7 533.2 V552.8 M469.7 552.8 L516.3 543.8" fill="none" stroke="#5cf872" stroke-width="1.7"/><path d="M450 531.7 L469.7 533.2 V552.8 L450 550 Z" fill="#e0fff0"/><path d="M469.7 533.2 L486.2 530.2 L516.3 543.8 L469.7 552.8 Z" fill="#e6fff4"/><path d="M460.5 449 L466.5 454 L472.5 450" fill="#b8f5cf" stroke="#5cf872" stroke-width="1.6"/><path d="M482.7 429.7 L488.7 434.7 L494.7 430.7" fill="#b8f5cf" stroke="#5cf872" stroke-width="1.6"/><path d="M506 411.6 L512 416.6 L518 412.6" fill="#b8f5cf" stroke="#5cf872" stroke-width="1.6"/><path d="M530.6 390 L536.6 395 L542.6 391" fill="#b8f5cf" stroke="#5cf872" stroke-width="1.6"/><path d="M573 383.2 L579 388.2 L585 384.2" fill="#b8f5cf" stroke="#5cf872" stroke-width="1.6"/><path d="M602 379.7 L608 384.7 L614 380.7" fill="#b8f5cf" stroke="#5cf872" stroke-width="1.6"/><path d="M482 497 C488 470 520 440 560 421 C590 408 625 402 652 401.6 L645 436 C615 436 580 441 552 454 C525 468 505 490 505 507 C505 520 508 530 512.7 541 C495 532 480 518 482 497 Z" fill="url(#band)" stroke="#5cf872" stroke-width="1.5"/><path d="M652 401.6 L655.2 397.4 L654 388.6" fill="none" stroke="#5cf872" stroke-width="1.8"/><path d="M645 438 C615 438 580 444 553 457 C527 471 508 492 508 508 C508 522 511 533 515 543" fill="none" stroke="#5cf872" stroke-width="1.6"/><path d="M492.5 520.4 L495.5 516.6 L498.5 520.4 L495.5 524.1999999999999 Z" fill="#86e89c" stroke="#5cf872" stroke-width="1.2"/><path d="M490 500.8 L493 497.0 L496 500.8 L493 504.6 Z" fill="#86e89c" stroke="#5cf872" stroke-width="1.2"/><path d="M493.7 482.5 L496.7 478.7 L499.7 482.5 L496.7 486.3 Z" fill="#86e89c" stroke="#5cf872" stroke-width="1.2"/><path d="M504.8 465.3 L507.8 461.5 L510.8 465.3 L507.8 469.1 Z" fill="#86e89c" stroke="#5cf872" stroke-width="1.2"/><path d="M520.7 449.4 L523.7 445.59999999999997 L526.7 449.4 L523.7 453.2 Z" fill="#86e89c" stroke="#5cf872" stroke-width="1.2"/><path d="M541.5 437 L544.5 433.2 L547.5 437 L544.5 440.8 Z" fill="#86e89c" stroke="#5cf872" stroke-width="1.2"/><path d="M566 426 L569 422.2 L572 426 L569 429.8 Z" fill="#86e89c" stroke="#5cf872" stroke-width="1.2"/><path d="M593 420 L596 416.2 L599 420 L596 423.8 Z" fill="#86e89c" stroke="#5cf872" stroke-width="1.2"/><path d="M621 417.6 L624 413.8 L627 417.6 L624 421.40000000000003 Z" fill="#86e89c" stroke="#5cf872" stroke-width="1.2"/><path d="M635.2 593.2 L729.0 519.3 L750.0 502.0 L758.0 493.0 L763.0 482.0 L765.1 473.3 L776.8 464.1 L783.5 466.0 L798.8 472.7 L852.7 500.2 L855.2 504.0 L855.2 551.7 L852.7 555.4 L730.4 650.9 L650.8 660.3 L597.8 632.2 L596.2 623.6 L603.3 609.6 L609.5 598.6 L621.2 588.5 Z" fill="#cdfce4" stroke="#5cf872" stroke-width="2" stroke-linejoin="round"/><path d="M855.2 506 V550" stroke="#111" stroke-width="1.2"/><defs><radialGradient id="bhi" cx="0.8" cy="0.25" r="0.5"><stop offset="0" stop-color="#ffffff"/><stop offset="1" stop-color="#ffffff" stop-opacity="0"/></radialGradient></defs><defs><clipPath id="bclip"><path d="M635.2 593.2 L729.0 519.3 L750.0 502.0 L758.0 493.0 L763.0 482.0 L765.1 473.3 L776.8 464.1 L783.5 466.0 L798.8 472.7 L852.7 500.2 L855.2 504.0 L855.2 551.7 L852.7 555.4 L730.4 650.9 L650.8 660.3 L597.8 632.2 L596.2 623.6 L603.3 609.6 L609.5 598.6 L621.2 588.5 Z"/></clipPath></defs><g clip-path="url(#bclip)"><path d="M635.2 593.2 L729 519.3 C745 507 760 495 765.1 473.3  C768.5 475.7 780.9 483.3 785.3 487.5 C789.6 491.8 790.0 495.0 791.4 498.8 C792.8 502.6 794.0 506.3 793.5 510.4 C792.9 514.4 791.1 519.1 788.4 523.3 C785.7 527.5 781.2 531.7 777.2 535.5 C773.1 539.3 768.9 542.5 764.3 546.1 C759.7 549.7 754.4 553.3 749.6 557.2 C744.7 561.1 739.8 565.7 735.0 569.3 C730.2 572.9 725.8 575.5 720.7 578.8 C715.6 582.2 710.3 586.5 704.4 589.4 C698.4 592.3 691.8 594.8 685.1 596.1 C678.5 597.5 671.6 597.3 664.5 597.3 C657.4 597.3 649.4 597.3 642.3 596.1 C635.3 594.9 623.5 590.1 622.3 590.3 C621.1 590.4 633.1 595.9 635.2 597.0 Z" fill="url(#bowlin)" stroke="#5cf872" stroke-width="1.7"/><path d="M635.2 593.2 L729 519.3 C745 507 760 495 765.1 473.3  C768.5 475.7 780.9 483.3 785.3 487.5 C789.6 491.8 790.0 495.0 791.4 498.8 C792.8 502.6 794.0 506.3 793.5 510.4 C792.9 514.4 791.1 519.1 788.4 523.3 C785.7 527.5 781.2 531.7 777.2 535.5 C773.1 539.3 768.9 542.5 764.3 546.1 C759.7 549.7 754.4 553.3 749.6 557.2 C744.7 561.1 739.8 565.7 735.0 569.3 C730.2 572.9 725.8 575.5 720.7 578.8 C715.6 582.2 710.3 586.5 704.4 589.4 C698.4 592.3 691.8 594.8 685.1 596.1 C678.5 597.5 671.6 597.3 664.5 597.3 C657.4 597.3 649.4 597.3 642.3 596.1 C635.3 594.9 623.5 590.1 622.3 590.3 C621.1 590.4 633.1 595.9 635.2 597.0 Z" fill="url(#bhi)"/><path d="M729 519.3 C735 525 735 530 732 534 C745 540 760 545 775 543 M690 550 C700 556 715 565 725 578 M660 575 C665 585 675 590 690 596" fill="none" stroke="#5cf872" stroke-width="1.6"/><path d="M781.6 466.6 C784.0 468.6 792.1 473.9 795.9 478.5 C799.8 483.1 802.7 488.6 804.6 494.2 C806.5 499.8 808.1 506.0 807.3 512.0 C806.6 518.1 803.7 525.1 800.2 530.7 C796.8 536.3 791.4 541.3 786.8 545.7 C782.3 550.1 777.7 553.3 772.9 557.1 C768.2 560.9 763.2 564.3 758.2 568.2 C753.3 572.1 748.4 576.8 743.4 580.5 C738.4 584.2 733.8 587.0 728.3 590.6 C722.8 594.1 717.2 598.8 710.4 602.0 C703.7 605.2 695.5 608.3 687.9 609.9 C680.2 611.4 672.5 611.3 664.5 611.3 C656.5 611.3 647.7 611.2 640.1 609.9 C632.4 608.6 622.1 604.8 618.5 603.7" fill="none" stroke="#5cf872" stroke-width="1.7"/><path d="M784.8 462.7 C787.3 464.8 795.7 470.3 799.7 475.2 C803.8 480.2 807.2 486.3 809.3 492.6 C811.4 498.8 813.1 505.8 812.3 512.6 C811.5 519.4 808.1 527.3 804.5 533.4 C800.8 539.5 795.0 544.7 790.3 549.3 C785.6 553.9 780.8 557.2 776.0 561.0 C771.2 564.8 766.3 568.2 761.4 572.1 C756.4 576.0 751.4 580.7 746.4 584.5 C741.3 588.3 736.7 591.1 731.1 594.7 C725.4 598.4 719.6 603.2 712.6 606.5 C705.6 609.8 696.9 613.1 688.9 614.8 C680.8 616.4 672.8 616.3 664.5 616.3 C656.2 616.3 647.1 616.1 639.2 614.8 C631.3 613.5 620.8 609.6 617.1 608.5" fill="none" stroke="#5cf872" stroke-width="1.6"/><path d="M789.9 456.5 C792.5 458.8 801.3 464.5 805.8 470.1 C810.3 475.6 814.5 482.7 816.9 489.9 C819.3 497.2 821.2 505.7 820.3 513.6 C819.3 521.6 815.3 530.7 811.3 537.6 C807.2 544.5 800.9 550.1 795.8 555.0 C790.8 560.0 785.9 563.4 781.0 567.3 C776.0 571.2 771.3 574.4 766.3 578.4 C761.4 582.3 756.3 587.1 751.2 590.9 C746.0 594.8 741.3 597.6 735.4 601.4 C729.6 605.2 723.6 610.2 716.1 613.7 C708.6 617.2 699.0 620.8 690.4 622.6 C681.8 624.4 673.2 624.3 664.5 624.3 C655.8 624.3 646.2 624.1 637.9 622.7 C629.7 621.4 618.7 617.3 614.9 616.2" fill="none" stroke="#5cf872" stroke-width="1.6"/><path d="M795.0 450.4 C797.8 452.8 807.0 458.7 811.9 464.9 C816.9 471.0 821.7 479.0 824.4 487.3 C827.2 495.6 829.3 505.5 828.2 514.6 C827.1 523.7 822.5 534.1 818.0 541.9 C813.6 549.6 806.7 555.5 801.4 560.8 C796.0 566.1 790.9 569.6 785.9 573.6 C780.9 577.6 776.3 580.7 771.3 584.6 C766.3 588.6 761.2 593.4 756.0 597.3 C750.7 601.2 745.9 604.2 739.8 608.1 C733.8 612.1 727.5 617.2 719.5 620.9 C711.6 624.6 701.2 628.6 692.0 630.5 C682.8 632.3 673.7 632.3 664.5 632.3 C655.3 632.3 645.3 632.0 636.6 630.6 C628.0 629.2 616.6 625.0 612.6 623.9" fill="none" stroke="#5cf872" stroke-width="1.7"/><path d="M820.3 513.6 L828.2 514.6" stroke="#5cf872" stroke-width="1.5"/><path d="M811.3 537.6 L818.0 541.9" stroke="#5cf872" stroke-width="1.5"/><path d="M795.8 555.0 L801.4 560.8" stroke="#5cf872" stroke-width="1.5"/><path d="M781.0 567.3 L785.9 573.6" stroke="#5cf872" stroke-width="1.5"/><path d="M766.3 578.4 L771.3 584.6" stroke="#5cf872" stroke-width="1.5"/><path d="M751.2 590.9 L756.0 597.3" stroke="#5cf872" stroke-width="1.5"/><path d="M735.4 601.4 L739.8 608.1" stroke="#5cf872" stroke-width="1.5"/><path d="M716.1 613.7 L719.5 620.9" stroke="#5cf872" stroke-width="1.5"/><path d="M690.4 622.6 L692.0 630.5" stroke="#5cf872" stroke-width="1.5"/><path d="M664.5 624.3 L664.5 632.3" stroke="#5cf872" stroke-width="1.5"/><path d="M781.0 567.3 L766.3 578.4 L771.3 584.6 L785.9 573.6 Z" fill="#f0fffa"/><path d="M766.3 578.4 L751.2 590.9 L756.0 597.3 L771.3 584.6 Z" fill="#f0fffa"/><path d="M735.4 601.4 L716.1 613.7 L719.5 620.9 L739.8 608.1 Z" fill="#f0fffa"/><path d="M798.8 472.7 C822 490 832 505 835 520 C838 540 830 560 815 575 L780 612 L730.4 650.9" fill="none" stroke="#5cf872" stroke-width="1.5"/><path d="M852.7 502 L835 520 M855.2 551.7 L815 575" fill="none" stroke="#5cf872" stroke-width="1.4"/><path d="M596.2 623.6 L650 640 L700 642 L730.4 650.9 M597.8 632.2 L650.8 660.3" fill="none" stroke="#5cf872" stroke-width="1.4"/><path d="M774.2 472 L777.2 468.5 L780.2 472 L777.2 475.5 Z" fill="#86e89c" stroke="#5cf872" stroke-width="1.2"/><path d="M787.6 483 L790.6 479.5 L793.6 483 L790.6 486.5 Z" fill="#86e89c" stroke="#5cf872" stroke-width="1.2"/><path d="M795 496.5 L798 493.0 L801 496.5 L798 500.0 Z" fill="#86e89c" stroke="#5cf872" stroke-width="1.2"/><path d="M797.4 511.2 L800.4 507.7 L803.4 511.2 L800.4 514.7 Z" fill="#86e89c" stroke="#5cf872" stroke-width="1.2"/><path d="M791.3 527 L794.3 523.5 L797.3 527 L794.3 530.5 Z" fill="#86e89c" stroke="#5cf872" stroke-width="1.2"/><path d="M779 540.6 L782 537.1 L785 540.6 L782 544.1 Z" fill="#86e89c" stroke="#5cf872" stroke-width="1.2"/><path d="M765.6 551.6 L768.6 548.1 L771.6 551.6 L768.6 555.1 Z" fill="#86e89c" stroke="#5cf872" stroke-width="1.2"/><path d="M750.9 562.7 L753.9 559.2 L756.9 562.7 L753.9 566.2 Z" fill="#86e89c" stroke="#5cf872" stroke-width="1.2"/><path d="M736.2 574.9 L739.2 571.4 L742.2 574.9 L739.2 578.4 Z" fill="#86e89c" stroke="#5cf872" stroke-width="1.2"/><path d="M721.5 584.7 L724.5 581.2 L727.5 584.7 L724.5 588.2 Z" fill="#86e89c" stroke="#5cf872" stroke-width="1.2"/><path d="M704.4 595.7 L707.4 592.2 L710.4 595.7 L707.4 599.2 Z" fill="#86e89c" stroke="#5cf872" stroke-width="1.2"/><path d="M683.5 603 L686.5 599.5 L689.5 603 L686.5 606.5 Z" fill="#86e89c" stroke="#5cf872" stroke-width="1.2"/><path d="M661.5 604.3 L664.5 600.8 L667.5 604.3 L664.5 607.8 Z" fill="#86e89c" stroke="#5cf872" stroke-width="1.2"/><path d="M638.2 603 L641.2 599.5 L644.2 603 L641.2 606.5 Z" fill="#86e89c" stroke="#5cf872" stroke-width="1.2"/><path d="M617.4 597 L620.4 593.5 L623.4 597 L620.4 600.5 Z" fill="#86e89c" stroke="#5cf872" stroke-width="1.2"/></g><path d="M635.2 593.2 L729.0 519.3 L750.0 502.0 L758.0 493.0 L763.0 482.0 L765.1 473.3 L776.8 464.1 L783.5 466.0 L798.8 472.7 L852.7 500.2 L855.2 504.0 L855.2 551.7 L852.7 555.4 L730.4 650.9 L650.8 660.3 L597.8 632.2 L596.2 623.6 L603.3 609.6 L609.5 598.6 L621.2 588.5 Z" fill="none" stroke="#5cf872" stroke-width="2" stroke-linejoin="round"/></svg><svg style="left:0;top:0" width="960" height="898" viewBox="0 0 960 898"><path d="M875.7 136.7 L886.8 123.4 L898 136.7 Z" fill="#8e9ba5"/><path d="M875.7 242 L886.8 254 L898 242 Z" fill="#8e9ba5"/><path d="M834.7 177.7 L821 189.3 L834.7 201 Z" fill="#8e9ba5"/><path d="M939 177.7 L952.5 189.3 L939 201 Z" fill="#8e9ba5"/><circle cx="944" cy="131.5" r="6.2" fill="#8e9ba5"/><path d="M838 157 L843 147 Q852 135 868.6 131.4 L869 137 Q856 140 850 148 L853 150 Z" fill="#8e9ba5"/><path d="M936 157 L931 147 Q922 135 905.4 131.4 L905 137 Q918 140 924 148 L921 150 Z" fill="#8e9ba5"/><path d="M858.8 163.5 L883.7 146.5 L892.6 147.4 L914 160.8 L924.7 175.9 L925.6 202.6 L921.2 216.9 L903.3 226.7 L883.7 231.2 L873 225.8 L851.7 212.4 L848.1 199.1 L848.1 181.3 L853.5 168.8 Z" fill="#8e9ba5" stroke="#3a3f44" stroke-width="0.7"/><g fill="none" stroke="#2e3236" stroke-width="0.9"><path d="M853.5 170.6 L883.7 183 L896.2 183 L899.8 193.7 L896.2 200.9 L885.5 200.9 L880.2 192 L883.7 183"/><path d="M848.1 181.3 L880.2 192"/><path d="M896.2 183 L915.8 167 L924.7 175.9 M899.8 193.7 L924.7 184.8"/><path d="M885.5 200.9 V227 M896.2 200.9 V227 M876 227 L885.5 227 L896.2 227 L905 225"/><path d="M858.8 163.5 L853.5 170.6"/></g><g font-family="Liberation Sans" font-weight="bold" fill="#6a757d" font-size="9"><text x="887.3" y="168" text-anchor="middle" transform="rotate(24 887.3 165)">TOP</text><text x="866" y="206" text-anchor="middle" font-size="8.5" transform="rotate(26 866 203)">FRONT</text><text x="912" y="206" text-anchor="middle" font-size="8.5" transform="rotate(-27 912 203)">RIGHT</text></g><path d="M922 231 L932 227 L941.6 231 V241 L932 245.4 L922 241 Z" fill="#8e9ba5" stroke="#3a3f44" stroke-width="0.7"/><path d="M922 231 L932 235 L941.6 231 M932 235 V245.4" fill="none" stroke="#3a3f44" stroke-width="0.7"/><path d="M839 217.8 V179.5" stroke="#1a1aa0" stroke-width="1.4"/><path d="M839 217.8 L871 192.8" stroke="#40c040" stroke-width="1.1"/><path d="M839 217.8 L878.4 239" stroke="#b01818" stroke-width="1.4"/><path d="M926.5 866 V847" stroke="#1a2a9a" stroke-width="1.2"/><path d="M924.5 855 L926.5 846 L928.5 855 Z" fill="#1a2a9a"/><path d="M926.5 866 L936 857.5" stroke="#2a9a2a" stroke-width="1.1"/><circle cx="936" cy="857.5" r="1.4" fill="#2a9a2a"/><path d="M926.5 866 L945 877" stroke="#8a1a1a" stroke-width="1.3"/><path d="M938 870.5 L945 877 L941 873 Z" fill="#8a1a1a" stroke="#8a1a1a" stroke-width="2"/><g font-family="Liberation Sans" font-size="8.5" fill="#000"><text x="927" y="845">Z</text><text x="939" y="856">Y</text><text x="946" y="876">X</text></g></svg><div class="r" style="left:959px;top:0px;width:2px;height:898px;background:#8a8d91;"></div><div class="r" style="left:959px;top:0px;width:2px;height:40px;background:#5a6a90;"></div><div class="r" style="left:961px;top:0px;width:958px;height:23px;background:#ffffff;"></div><div class="r" style="left:961px;top:23px;width:958px;height:58px;background:#f0f0f0;"></div><div class="r" style="left:962px;top:23px;width:957px;height:1px;background:#f8f8f8;"></div><div class="r" style="left:962px;top:80px;width:957px;height:2px;background:#a0a0a0;"></div><div class="t" style="left:969px;top:3.73px;font-size:14.5px;color:#000000;font-weight:normal;letter-spacing:0px;">File</div><div class="t" style="left:1008px;top:3.73px;font-size:14.5px;color:#000000;font-weight:normal;letter-spacing:0px;">Edit</div><div class="t" style="left:1050px;top:3.73px;font-size:14.5px;color:#000000;font-weight:normal;letter-spacing:0px;">Program</div><div class="t" style="left:1123px;top:3.73px;font-size:14.5px;color:#000000;font-weight:normal;letter-spacing:0px;">View</div><div class="t" style="left:1171px;top:3.73px;font-size:14.5px;color:#000000;font-weight:normal;letter-spacing:0px;">Tools</div><div class="t" style="left:1222px;top:3.73px;font-size:14.5px;color:#000000;font-weight:normal;letter-spacing:0px;">Utilities</div><div class="t" style="left:1287.5px;top:3.73px;font-size:14.5px;color:#000000;font-weight:normal;letter-spacing:0px;">Connect</div><div class="t" style="left:1357.5px;top:3.73px;font-size:14.5px;color:#000000;font-weight:normal;letter-spacing:0px;">Help</div><div class="t" style="left:1406px;top:3.73px;font-size:14.5px;color:#000000;font-weight:normal;letter-spacing:0px;">Probing</div><div class="t" style="left:1474px;top:3.73px;font-size:14.5px;color:#000000;font-weight:normal;letter-spacing:0px;">Record</div><div class="t" style="left:1899px;top:3.30px;font-size:15px;color:#000000;font-weight:normal;letter-spacing:0px;">X</div><div class="r" style="left:965.5px;top:27px;width:2px;height:2px;background:#b4b4b4;"></div><div class="r" style="left:965.5px;top:31px;width:2px;height:2px;background:#b4b4b4;"></div><div class="r" style="left:965.5px;top:35px;width:2px;height:2px;background:#b4b4b4;"></div><div class="r" style="left:965.5px;top:39px;width:2px;height:2px;background:#b4b4b4;"></div><div class="r" style="left:965.5px;top:43px;width:2px;height:2px;background:#b4b4b4;"></div><div class="r" style="left:965.5px;top:47px;width:2px;height:2px;background:#b4b4b4;"></div><div class="r" style="left:965.5px;top:51px;width:2px;height:2px;background:#b4b4b4;"></div><div class="r" style="left:965.5px;top:55px;width:2px;height:2px;background:#b4b4b4;"></div><div class="r" style="left:965.5px;top:59px;width:2px;height:2px;background:#b4b4b4;"></div><div class="r" style="left:965.5px;top:63px;width:2px;height:2px;background:#b4b4b4;"></div><div class="r" style="left:965.5px;top:67px;width:2px;height:2px;background:#b4b4b4;"></div><div class="r" style="left:965.5px;top:71px;width:2px;height:2px;background:#b4b4b4;"></div><div class="r" style="left:1156.5px;top:27px;width:2px;height:2px;background:#b4b4b4;"></div><div class="r" style="left:1156.5px;top:31px;width:2px;height:2px;background:#b4b4b4;"></div><div class="r" style="left:1156.5px;top:35px;width:2px;height:2px;background:#b4b4b4;"></div><div class="r" style="left:1156.5px;top:39px;width:2px;height:2px;background:#b4b4b4;"></div><div class="r" style="left:1156.5px;top:43px;width:2px;height:2px;background:#b4b4b4;"></div><div class="r" style="left:1156.5px;top:47px;width:2px;height:2px;background:#b4b4b4;"></div><div class="r" style="left:1156.5px;top:51px;width:2px;height:2px;background:#b4b4b4;"></div><div class="r" style="left:1156.5px;top:55px;width:2px;height:2px;background:#b4b4b4;"></div><div class="r" style="left:1156.5px;top:59px;width:2px;height:2px;background:#b4b4b4;"></div><div class="r" style="left:1156.5px;top:63px;width:2px;height:2px;background:#b4b4b4;"></div><div class="r" style="left:1156.5px;top:67px;width:2px;height:2px;background:#b4b4b4;"></div><div class="r" style="left:1156.5px;top:71px;width:2px;height:2px;background:#b4b4b4;"></div><div class="r" style="left:1240.5px;top:27px;width:2px;height:2px;background:#b4b4b4;"></div><div class="r" style="left:1240.5px;top:31px;width:2px;height:2px;background:#b4b4b4;"></div><div class="r" style="left:1240.5px;top:35px;width:2px;height:2px;background:#b4b4b4;"></div><div class="r" style="left:1240.5px;top:39px;width:2px;height:2px;background:#b4b4b4;"></div><div class="r" style="left:1240.5px;top:43px;width:2px;height:2px;background:#b4b4b4;"></div><div class="r" style="left:1240.5px;top:47px;width:2px;height:2px;background:#b4b4b4;"></div><div class="r" style="left:1240.5px;top:51px;width:2px;height:2px;background:#b4b4b4;"></div><div class="r" style="left:1240.5px;top:55px;width:2px;height:2px;background:#b4b4b4;"></div><div class="r" style="left:1240.5px;top:59px;width:2px;height:2px;background:#b4b4b4;"></div><div class="r" style="left:1240.5px;top:63px;width:2px;height:2px;background:#b4b4b4;"></div><div class="r" style="left:1240.5px;top:67px;width:2px;height:2px;background:#b4b4b4;"></div><div class="r" style="left:1240.5px;top:71px;width:2px;height:2px;background:#b4b4b4;"></div><div class="r" style="left:1324.5px;top:27px;width:2px;height:2px;background:#b4b4b4;"></div><div class="r" style="left:1324.5px;top:31px;width:2px;height:2px;background:#b4b4b4;"></div><div class="r" style="left:1324.5px;top:35px;width:2px;height:2px;background:#b4b4b4;"></div><div class="r" style="left:1324.5px;top:39px;width:2px;height:2px;background:#b4b4b4;"></div><div class="r" style="left:1324.5px;top:43px;width:2px;height:2px;background:#b4b4b4;"></div><div class="r" style="left:1324.5px;top:47px;width:2px;height:2px;background:#b4b4b4;"></div><div class="r" style="left:1324.5px;top:51px;width:2px;height:2px;background:#b4b4b4;"></div><div class="r" style="left:1324.5px;top:55px;width:2px;height:2px;background:#b4b4b4;"></div><div class="r" style="left:1324.5px;top:59px;width:2px;height:2px;background:#b4b4b4;"></div><div class="r" style="left:1324.5px;top:63px;width:2px;height:2px;background:#b4b4b4;"></div><div class="r" style="left:1324.5px;top:67px;width:2px;height:2px;background:#b4b4b4;"></div><div class="r" style="left:1324.5px;top:71px;width:2px;height:2px;background:#b4b4b4;"></div><div class="r" style="left:1409px;top:27px;width:2px;height:2px;background:#b4b4b4;"></div><div class="r" style="left:1409px;top:31px;width:2px;height:2px;background:#b4b4b4;"></div><div class="r" style="left:1409px;top:35px;width:2px;height:2px;background:#b4b4b4;"></div><div class="r" style="left:1409px;top:39px;width:2px;height:2px;background:#b4b4b4;"></div><div class="r" style="left:1409px;top:43px;width:2px;height:2px;background:#b4b4b4;"></div><div class="r" style="left:1409px;top:47px;width:2px;height:2px;background:#b4b4b4;"></div><div class="r" style="left:1409px;top:51px;width:2px;height:2px;background:#b4b4b4;"></div><div class="r" style="left:1409px;top:55px;width:2px;height:2px;background:#b4b4b4;"></div><div class="r" style="left:1409px;top:59px;width:2px;height:2px;background:#b4b4b4;"></div><div class="r" style="left:1409px;top:63px;width:2px;height:2px;background:#b4b4b4;"></div><div class="r" style="left:1409px;top:67px;width:2px;height:2px;background:#b4b4b4;"></div><div class="r" style="left:1409px;top:71px;width:2px;height:2px;background:#b4b4b4;"></div><div class="r" style="left:1493px;top:27px;width:2px;height:2px;background:#b4b4b4;"></div><div class="r" style="left:1493px;top:31px;width:2px;height:2px;background:#b4b4b4;"></div><div class="r" style="left:1493px;top:35px;width:2px;height:2px;background:#b4b4b4;"></div><div class="r" style="left:1493px;top:39px;width:2px;height:2px;background:#b4b4b4;"></div><div class="r" style="left:1493px;top:43px;width:2px;height:2px;background:#b4b4b4;"></div><div class="r" style="left:1493px;top:47px;width:2px;height:2px;background:#b4b4b4;"></div><div class="r" style="left:1493px;top:51px;width:2px;height:2px;background:#b4b4b4;"></div><div class="r" style="left:1493px;top:55px;width:2px;height:2px;background:#b4b4b4;"></div><div class="r" style="left:1493px;top:59px;width:2px;height:2px;background:#b4b4b4;"></div><div class="r" style="left:1493px;top:63px;width:2px;height:2px;background:#b4b4b4;"></div><div class="r" style="left:1493px;top:67px;width:2px;height:2px;background:#b4b4b4;"></div><div class="r" style="left:1493px;top:71px;width:2px;height:2px;background:#b4b4b4;"></div><div class="r" style="left:1577px;top:27px;width:2px;height:2px;background:#b4b4b4;"></div><div class="r" style="left:1577px;top:31px;width:2px;height:2px;background:#b4b4b4;"></div><div class="r" style="left:1577px;top:35px;width:2px;height:2px;background:#b4b4b4;"></div><div class="r" style="left:1577px;top:39px;width:2px;height:2px;background:#b4b4b4;"></div><div class="r" style="left:1577px;top:43px;width:2px;height:2px;background:#b4b4b4;"></div><div class="r" style="left:1577px;top:47px;width:2px;height:2px;background:#b4b4b4;"></div><div class="r" style="left:1577px;top:51px;width:2px;height:2px;background:#b4b4b4;"></div><div class="r" style="left:1577px;top:55px;width:2px;height:2px;background:#b4b4b4;"></div><div class="r" style="left:1577px;top:59px;width:2px;height:2px;background:#b4b4b4;"></div><div class="r" style="left:1577px;top:63px;width:2px;height:2px;background:#b4b4b4;"></div><div class="r" style="left:1577px;top:67px;width:2px;height:2px;background:#b4b4b4;"></div><div class="r" style="left:1577px;top:71px;width:2px;height:2px;background:#b4b4b4;"></div><div class="r" style="left:1675.5px;top:27px;width:2px;height:2px;background:#b4b4b4;"></div><div class="r" style="left:1675.5px;top:31px;width:2px;height:2px;background:#b4b4b4;"></div><div class="r" style="left:1675.5px;top:35px;width:2px;height:2px;background:#b4b4b4;"></div><div class="r" style="left:1675.5px;top:39px;width:2px;height:2px;background:#b4b4b4;"></div><div class="r" style="left:1675.5px;top:43px;width:2px;height:2px;background:#b4b4b4;"></div><div class="r" style="left:1675.5px;top:47px;width:2px;height:2px;background:#b4b4b4;"></div><div class="r" style="left:1675.5px;top:51px;width:2px;height:2px;background:#b4b4b4;"></div><div class="r" style="left:1675.5px;top:55px;width:2px;height:2px;background:#b4b4b4;"></div><div class="r" style="left:1675.5px;top:59px;width:2px;height:2px;background:#b4b4b4;"></div><div class="r" style="left:1675.5px;top:63px;width:2px;height:2px;background:#b4b4b4;"></div><div class="r" style="left:1675.5px;top:67px;width:2px;height:2px;background:#b4b4b4;"></div><div class="r" style="left:1675.5px;top:71px;width:2px;height:2px;background:#b4b4b4;"></div><div class="r" style="left:1759.5px;top:27px;width:2px;height:2px;background:#b4b4b4;"></div><div class="r" style="left:1759.5px;top:31px;width:2px;height:2px;background:#b4b4b4;"></div><div class="r" style="left:1759.5px;top:35px;width:2px;height:2px;background:#b4b4b4;"></div><div class="r" style="left:1759.5px;top:39px;width:2px;height:2px;background:#b4b4b4;"></div><div class="r" style="left:1759.5px;top:43px;width:2px;height:2px;background:#b4b4b4;"></div><div class="r" style="left:1759.5px;top:47px;width:2px;height:2px;background:#b4b4b4;"></div><div class="r" style="left:1759.5px;top:51px;width:2px;height:2px;background:#b4b4b4;"></div><div class="r" style="left:1759.5px;top:55px;width:2px;height:2px;background:#b4b4b4;"></div><div class="r" style="left:1759.5px;top:59px;width:2px;height:2px;background:#b4b4b4;"></div><div class="r" style="left:1759.5px;top:63px;width:2px;height:2px;background:#b4b4b4;"></div><div class="r" style="left:1759.5px;top:67px;width:2px;height:2px;background:#b4b4b4;"></div><div class="r" style="left:1759.5px;top:71px;width:2px;height:2px;background:#b4b4b4;"></div><div class="r" style="left:1839.5px;top:27px;width:2px;height:2px;background:#b4b4b4;"></div><div class="r" style="left:1839.5px;top:31px;width:2px;height:2px;background:#b4b4b4;"></div><div class="r" style="left:1839.5px;top:35px;width:2px;height:2px;background:#b4b4b4;"></div><div class="r" style="left:1839.5px;top:39px;width:2px;height:2px;background:#b4b4b4;"></div><div class="r" style="left:1839.5px;top:43px;width:2px;height:2px;background:#b4b4b4;"></div><div class="r" style="left:1839.5px;top:47px;width:2px;height:2px;background:#b4b4b4;"></div><div class="r" style="left:1839.5px;top:51px;width:2px;height:2px;background:#b4b4b4;"></div><div class="r" style="left:1839.5px;top:55px;width:2px;height:2px;background:#b4b4b4;"></div><div class="r" style="left:1839.5px;top:59px;width:2px;height:2px;background:#b4b4b4;"></div><div class="r" style="left:1839.5px;top:63px;width:2px;height:2px;background:#b4b4b4;"></div><div class="r" style="left:1839.5px;top:67px;width:2px;height:2px;background:#b4b4b4;"></div><div class="r" style="left:1839.5px;top:71px;width:2px;height:2px;background:#b4b4b4;"></div><div class="r" style="left:1151px;top:23px;width:1px;height:57px;background:#cfcfcf;"></div><div class="r" style="left:1152px;top:23px;width:1px;height:57px;background:#ffffff;"></div><div class="r" style="left:1235px;top:23px;width:1px;height:57px;background:#cfcfcf;"></div><div class="r" style="left:1236px;top:23px;width:1px;height:57px;background:#ffffff;"></div><div class="r" style="left:1319.5px;top:23px;width:1px;height:57px;background:#cfcfcf;"></div><div class="r" style="left:1320.5px;top:23px;width:1px;height:57px;background:#ffffff;"></div><div class="r" style="left:1403.5px;top:23px;width:1px;height:57px;background:#cfcfcf;"></div><div class="r" style="left:1404.5px;top:23px;width:1px;height:57px;background:#ffffff;"></div><div class="r" style="left:1487.3px;top:23px;width:1px;height:57px;background:#cfcfcf;"></div><div class="r" style="left:1488.3px;top:23px;width:1px;height:57px;background:#ffffff;"></div><div class="r" style="left:1571.5px;top:23px;width:1px;height:57px;background:#cfcfcf;"></div><div class="r" style="left:1572.5px;top:23px;width:1px;height:57px;background:#ffffff;"></div><div class="r" style="left:1670px;top:23px;width:1px;height:57px;background:#cfcfcf;"></div><div class="r" style="left:1671px;top:23px;width:1px;height:57px;background:#ffffff;"></div><div class="r" style="left:1754.5px;top:23px;width:1px;height:57px;background:#cfcfcf;"></div><div class="r" style="left:1755.5px;top:23px;width:1px;height:57px;background:#ffffff;"></div><div class="r" style="left:1834.3px;top:23px;width:1px;height:57px;background:#cfcfcf;"></div><div class="r" style="left:1835.3px;top:23px;width:1px;height:57px;background:#ffffff;"></div><svg style="left:0;top:0" width="1919" height="82" viewBox="0 0 1919 82">
<defs>
<linearGradient id="rfB" x1="0" y1="0" x2="1" y2="1"><stop offset="0" stop-color="#1a6fb8"/><stop offset="0.5" stop-color="#3cb8ec"/><stop offset="1" stop-color="#0a3a70"/></linearGradient>
<linearGradient id="rfK" x1="0" y1="0" x2="1" y2="1"><stop offset="0" stop-color="#2a4a66"/><stop offset="1" stop-color="#000000"/></linearGradient>
<radialGradient id="rGl" cx="0.45" cy="0.3" r="0.75"><stop offset="0" stop-color="#c0c8ee"/><stop offset="0.45" stop-color="#3a58b0"/><stop offset="1" stop-color="#0e2a88"/></radialGradient>
<linearGradient id="rUn" x1="0" y1="0" x2="1" y2="1"><stop offset="0" stop-color="#d0d0d0"/><stop offset="1" stop-color="#8a8a8a"/></linearGradient>
<linearGradient id="rFf" x1="0" y1="0" x2="0" y2="1"><stop offset="0" stop-color="#6cc8ff"/><stop offset="1" stop-color="#1a90e8"/></linearGradient>
<linearGradient id="rBox" x1="0" y1="0" x2="0" y2="1"><stop offset="0" stop-color="#fff0a0"/><stop offset="1" stop-color="#f0b020"/></linearGradient>
<linearGradient id="rGr" x1="0" y1="0" x2="0" y2="1"><stop offset="0" stop-color="#00a000"/><stop offset="1" stop-color="#00d000"/></linearGradient>
</defs>
<!-- folder -->
<path d="M989 38 Q989 35 992 35 L1007 34 L1010 31 L1021 30.5 Q1023 30.5 1022.5 33 L1019 56 L989 50 Z" fill="url(#rfB)"/>
<path d="M977 44 L1013 47 Q1015 47 1016 50 L1019 73 Q1019 74 1017 73.5 L983 67 Q981 66.5 980.5 64 Z" fill="url(#rfK)"/>
<!-- globe -->
<circle cx="1055.3" cy="51.5" r="23.3" fill="url(#rGl)" stroke="#1a2f80" stroke-width="0.9"/>
<path d="M1049 44.5 Q1050 38 1054 35 Q1058 31.5 1064 32.5 Q1072 35 1074 42 Q1075 48 1072 52 Q1069 55 1066 58 Q1062 62 1060 61 Q1058 55 1056 50 Q1052 47 1049 44.5 Z" fill="#e6eaf6"/>
<path d="M1033.5 47 Q1040 46 1045 53 Q1042 58 1040 63 Q1038 65 1036 60 Q1032.5 53 1033.5 47 Z" fill="#b4bee6"/>
<path d="M1039 41 Q1044 36 1052 36.5 Q1048 42 1046 45 Q1042 44 1039 41 Z" fill="#9aa4bc"/>
<path d="M1068 57 Q1072 55 1074 59 Q1071 64 1068 63 Z" fill="#c8d0ee"/>
<ellipse cx="1055" cy="68" rx="14" ry="4" fill="#7a90d8" opacity="0.5"/>
<!-- floppy -->
<path d="M1090 31.5 H1124 L1130.5 38 V72 H1090 Z" fill="#4a6fb8" stroke="#111" stroke-width="1.3" stroke-linejoin="round"/>
<rect x="1098.5" y="32" width="20" height="12.5" fill="#cccccc" stroke="#111" stroke-width="1"/>
<rect x="1114" y="33" width="3" height="10.5" fill="#e0e0e0"/>
<rect x="1097" y="53.5" width="25" height="18.5" fill="#ffffff" stroke="#111" stroke-width="1"/>
<path d="M1097 60 H1122 M1097 65.8 H1122" stroke="#222" stroke-width="1"/>
<!-- undo -->
<path d="M1178 57 Q1183 68 1195 68 Q1208 68 1208 52 Q1208 38 1193 38 Q1186 38 1182 44 L1176 36 L1169 53 L1187 51 L1182 47 Q1186 44 1192 44 Q1201 45 1201 53 Q1201 61 1193 62 Q1186 62 1182 56 Z" fill="#9a9a9a"/>
<path d="M1177 55 Q1182 66 1193 66 Q1206 66 1206 51 Q1206 37 1192 37 Q1185 37 1180 43 L1174 33 L1169 51 L1186 50 L1181 46 Q1185 42 1191 42 Q1200 43 1200 52 Q1200 60 1192 61 Q1185 61 1181 54 Z" fill="url(#rUn)"/>
<path d="M1225 48.5 L1228 51.5 L1225 54.5 M1229 48.5 L1232 51.5 L1229 54.5" fill="none" stroke="#222" stroke-width="1.3"/>
<!-- add frame -->
<path d="M1261.5 30 H1269 V39.5 H1278.7 V47 H1269 V56 H1261.5 V47 H1252 V39.5 H1261.5 Z" fill="url(#rGr)"/>
<path d="M1284.4 60 V36" stroke="#2020e8" stroke-width="3"/><path d="M1280.5 38 L1284.4 29 L1288.3 38 Z" fill="#2a2af0"/>
<path d="M1284.4 61 L1258 66" stroke="#e03040" stroke-width="3"/><path d="M1259.5 62 L1251.3 67.8 L1260.5 70 Z" fill="#e84050"/>
<path d="M1284.4 61 L1294 70" stroke="#3a9a70" stroke-width="3"/><circle cx="1295.5" cy="71.5" r="3.2" fill="#40b080"/>
<path d="M1309 48.5 L1312 51.5 L1309 54.5 M1313 48.5 L1316 51.5 L1313 54.5" fill="none" stroke="#222" stroke-width="1.3"/>
<!-- fit -->
<rect x="1338.6" y="30" width="42.2" height="42.8" rx="2.5" fill="#f4f8f8" stroke="#888" stroke-width="0.8"/>
<rect x="1341" y="32.5" width="37.5" height="37.5" fill="#e4ecee"/>
<path d="M1341 32.5 H1352 L1358 38.5 L1352.5 44 L1346.5 38 V44 H1341 Z M1378.5 32.5 H1367.5 L1361.5 38.5 L1367 44 L1373 38 V44 H1378.5 Z M1341 70 H1352 L1358 64 L1352.5 58.5 L1346.5 64.5 V58.5 H1341 Z M1378.5 70 H1367.5 L1361.5 64 L1367 58.5 L1373 64.5 V58.5 H1378.5 Z" fill="#1f4a8c"/>
<path d="M1393 48.5 L1396 51.5 L1393 54.5 M1397 48.5 L1400 51.5 L1397 54.5" fill="none" stroke="#222" stroke-width="1.3"/>
<!-- cursor -->
<path d="M1425.5 30 L1451 56.5 L1439.5 57 L1445 70 L1440.5 71.5 L1435 59 L1425.5 65.5 Z" fill="#ffffff" stroke="#000" stroke-width="1.6" stroke-linejoin="round"/>
<path d="M1453 35.5 V46.5 L1455.5 44.5 L1458 49 L1459.5 48 L1457 44 L1461 43.5 Z" fill="#f8f8f8" stroke="#888" stroke-width="0.6"/>
<path d="M1476 48.5 L1479 51.5 L1476 54.5 M1480 48.5 L1483 51.5 L1480 54.5" fill="none" stroke="#222" stroke-width="1.3"/>
<!-- cnc -->
<rect x="1510" y="29" width="13.5" height="16" fill="#606060" stroke="#111" stroke-width="1"/>
<path d="M1510 45 H1523.5 L1520.5 53.8 H1513 Z" fill="#606060" stroke="#111" stroke-width="1"/>
<path d="M1505.5 56.5 L1526.5 49.5 L1548 56 L1527 63 Z" fill="#fff" stroke="#000" stroke-width="1.5" stroke-linejoin="round"/>
<path d="M1505.5 56.5 V68 L1527 75 V63 Z M1527 63 L1548 56 V68 L1527 75 Z" fill="#fff" stroke="#000" stroke-width="1.5" stroke-linejoin="round"/>
<path d="M1557.7 49.5 H1566.8 L1562.2 55.2 Z" fill="#000"/>
<!-- ffwd -->
<path d="M1595 42 Q1595 40 1597 41.2 L1613 51 Q1614.5 52 1613 53 L1597 63 Q1595 64 1595 62 Z" fill="url(#rFf)" stroke="#1a80d0" stroke-width="0.6"/>
<path d="M1611 42 Q1611 40 1613 41.2 L1629 51 Q1630.5 52 1629 53 L1613 63 Q1611 64 1611 62 Z" fill="url(#rFf)" stroke="#1a80d0" stroke-width="0.6"/>
<path d="M1642 49.5 H1651.4 L1646.7 55.2 Z" fill="#000"/>
<path d="M1659 48.5 L1662 51.5 L1659 54.5 M1663 48.5 L1666 51.5 L1663 54.5" fill="none" stroke="#222" stroke-width="1.3"/>
<!-- python -->
<path d="M1705 33 Q1692 33 1692 42 V53 Q1692 60.5 1699 60.5 H1701 V53 Q1701 48 1706 48 H1714 Q1718.6 48 1718.6 43 V38 Q1718.6 33 1712 33 Z" fill="#3a6fa6"/>
<path d="M1714.5 70.3 Q1727.9 70.3 1727.9 61 V50 Q1727.9 42.5 1721 42.5 H1719 V50 Q1719 55 1714 55 H1706 Q1700.7 55 1700.7 60 V65 Q1700.7 70.3 1708 70.3 Z" fill="#ffd040"/>
<circle cx="1715" cy="65" r="1.4" fill="#fff"/>
<path d="M1696.5 30 H1703.5 V40 H1714 V46 H1703.5 V55.7 H1696.5 V46 H1686.8 V40 H1696.5 Z" fill="url(#rGr)"/>
<path d="M1743 48.5 L1746 51.5 L1743 54.5 M1747 48.5 L1750 51.5 L1747 54.5" fill="none" stroke="#222" stroke-width="1.3"/>
<!-- box -->
<path d="M1783 48 L1797 55 L1814 47 L1798 40 Z" fill="#f8d040" stroke="#d88a10" stroke-width="1"/>
<path d="M1783 48 V62 L1797 72 V55 Z" fill="url(#rBox)" stroke="#d88a10" stroke-width="1"/>
<path d="M1797 55 V72 L1808 63 V48 Z" fill="#f0c030" stroke="#d88a10" stroke-width="1"/>
<path d="M1781 40 L1793 34 L1798 40 L1786 47 Z" fill="#ffe070" stroke="#d88a10" stroke-width="1"/>
<path d="M1798 40 L1806 32 L1814.5 41 L1807 46 Z" fill="#ffe070" stroke="#d88a10" stroke-width="1"/>
<path d="M1771 44 L1783 48 L1786 55 L1775 50 Z M1797 55 L1815.5 48 L1810 54 L1800 58 Z" fill="#ffd850" stroke="#d88a10" stroke-width="1"/>
<!-- tool -->
<rect x="1853" y="57" width="41.6" height="14.6" fill="#c8c8c8"/>
<path d="M1872 32 H1891.3 V44 Q1891.3 46.5 1889 46.5 H1874 Q1872 46.5 1872 44 Z" fill="#c8c8c8" stroke="#b0b0b0" stroke-width="0.6"/>
<path d="M1881 46.5 V63" stroke="#777" stroke-width="1.4"/>
<circle cx="1881.3" cy="64" r="2.6" fill="#7a0000"/>
<path d="M1866.9 46.5 V34" stroke="#3a60c0" stroke-width="1.4"/><path d="M1864.5 35.5 L1866.9 31.5 L1869.3 35.5" fill="none" stroke="#3a60c0" stroke-width="1.4"/>
<path d="M1866.9 46.5 L1854.5 50.5" stroke="#d02020" stroke-width="1.4"/><path d="M1857 48 L1853.6 51 L1858 52.5" fill="none" stroke="#d02020" stroke-width="1.4"/>
<path d="M1866.9 46.5 L1875 54" stroke="#60b040" stroke-width="1.4"/><path d="M1875.5 50.5 L1876 54.7 L1872 54.5" fill="none" stroke="#60b040" stroke-width="1.4"/>
</svg><div class="r" style="left:961px;top:82px;width:957px;height:816px;background:linear-gradient(#000033,#6262ab)"></div><div class="r" style="left:1918px;top:82px;width:1px;height:816px;background:#8a8a8a;"></div><div class="t" style="left:1025px;top:96.76px;font-size:18px;color:#ffffff;font-weight:normal;letter-spacing:0.53px;">New Station (1)</div><div class="t" style="left:1050px;top:128.76px;font-size:18px;color:#ffffff;font-weight:normal;letter-spacing:-0.2px;">Part Base</div><div class="t" style="left:1074.7px;top:160.76px;font-size:18px;color:#ffffff;font-weight:normal;letter-spacing:0.15px;">Part 0</div><div class="t" style="left:1074.7px;top:192.76px;font-size:18px;color:#ffffff;font-weight:normal;letter-spacing:0.15px;">Part 1</div><svg style="left:0;top:0" width="1919" height="898" viewBox="0 0 1919 898"><defs><linearGradient id="cubeT" x1="0" y1="0" x2="1" y2="1"><stop offset="0" stop-color="#c8ecff"/><stop offset="1" stop-color="#5ab4f0"/></linearGradient><linearGradient id="stn" x1="0" y1="0" x2="1" y2="0"><stop offset="0" stop-color="#f0f0f0"/><stop offset="0.5" stop-color="#c0c8d0"/><stop offset="1" stop-color="#3a80e0"/></linearGradient></defs><path d="M970 99.5 H989 L979.5 111 Z" fill="#fff"/><path d="M995 131.5 H1014 L1004.5 143 Z" fill="#fff"/><path d="M1002 99 L1010 95 V113 L1002 113.5 Z" fill="#e8e8e8"/><path d="M1010 95 L1017 93 V112.5 L1010 113 Z" fill="url(#stn)"/><path d="M1002 105 H1010 V113.5 H1002 Z" fill="#d0d0d0"/><path d="M1036 140 V128" stroke="#2a2ae8" stroke-width="1.6"/><path d="M1034 130 L1036 125 L1038 130 Z" fill="#2a2ae8"/><path d="M1036 140 L1023 142.5" stroke="#e03a3a" stroke-width="1.8"/><path d="M1025 140.5 L1020.5 143 L1025 144.5 Z" fill="#e03a3a"/><path d="M1036 140 L1041 145" stroke="#50c080" stroke-width="1.6"/><circle cx="1041.5" cy="145" r="1.8" fill="#50c080"/><path d="M1029.5 151 V198.5 H1042 M1029.5 166 H1042" fill="none" stroke="#8080a0" stroke-width="1.2"/><path d="M1045.5 162 L1059.5 157 L1066.5 162 L1052.5 167 Z" fill="#c8eaff" stroke="#111" stroke-width="0.8"/><path d="M1045.5 162 L1052.5 167 V178 L1045.5 173 Z" fill="#3a9ae0" stroke="#111" stroke-width="0.8"/><path d="M1052.5 167 L1066.5 162 V173 L1052.5 178 Z" fill="url(#cubeT)" stroke="#111" stroke-width="0.8"/><path d="M1045.5 194 L1059.5 189 L1066.5 194 L1052.5 199 Z" fill="#c8eaff" stroke="#111" stroke-width="0.8"/><path d="M1045.5 194 L1052.5 199 V210 L1045.5 205 Z" fill="#3a9ae0" stroke="#111" stroke-width="0.8"/><path d="M1052.5 199 L1066.5 194 V205 L1052.5 210 Z" fill="url(#cubeT)" stroke="#111" stroke-width="0.8"/></svg><svg style="left:0;top:0" width="1919" height="898" viewBox="0 0 1919 898"><defs>
<linearGradient id="gband" x1="0" y1="1" x2="1" y2="0"><stop offset="0" stop-color="#a2a2a2"/><stop offset="0.3" stop-color="#d8d8d8"/><stop offset="0.55" stop-color="#ffffff"/><stop offset="1" stop-color="#ffffff"/></linearGradient>
<linearGradient id="gbase" x1="0" y1="0" x2="1" y2="1"><stop offset="0" stop-color="#c6c6c6"/><stop offset="1" stop-color="#c0c0c0"/></linearGradient>
<linearGradient id="bin" x1="0" y1="0" x2="1" y2="1"><stop offset="0" stop-color="#f6f8fa"/><stop offset="0.35" stop-color="#e4e8ea"/><stop offset="1" stop-color="#d6dadc"/></linearGradient>
<radialGradient id="bhl" cx="0.25" cy="0.3" r="0.6"><stop offset="0" stop-color="#ffffff"/><stop offset="1" stop-color="#ffffff" stop-opacity="0"/></radialGradient>
<radialGradient id="bhl2" cx="0.5" cy="0.5" r="0.5"><stop offset="0" stop-color="#ffffff" stop-opacity="0.95"/><stop offset="1" stop-color="#ffffff" stop-opacity="0"/></radialGradient>
<linearGradient id="bflange" x1="0" y1="0" x2="0" y2="1"><stop offset="0" stop-color="#f2f6fa"/><stop offset="1" stop-color="#e8eef4"/></linearGradient>
</defs><path d="M1138.0 540.2 L1140.0 549.2 L1226.2 595.3 L1238.2 596.3 L1246.2 592.3 L1508.6 358.6 L1511.3 351.5 L1506.8 345.2 L1478.3 333.6 L1479.2 317.6 L1476.5 316.7 L1461.4 301.6 L1448.0 302.5 L1434.7 315.0 L1419.5 313.2 L1407.0 305.1 L1395.5 307.0 L1390.2 317.6 L1370.6 320.3 L1356.3 314.0 L1344.7 316.7 L1343.0 324.7 L1327.8 327.4 L1319.0 331.9 L1308.0 330.0 L1297.6 334.6 L1297.6 349.7 L1289.5 354.2 L1265.5 351.5 L1254.8 358.6 L1255.7 378.2 L1227.0 378.2 L1219.0 385.4 L1221.8 406.8 L1199.5 409.4 L1192.4 417.5 L1193.3 430.8 L1144.0 467.0 L1143.0 470.0 Z" fill="#c4c4c4"/><path d="M1140 549.2 L1226.2 595.3 L1238.2 596.3 L1246.2 592.3 L1508.6 358.6" fill="none" stroke="#b0b0b0" stroke-width="2"/><path d="M1192.4 417.5 L1195.0 441.0 L1214.0 432.0 Z" fill="#a8a8a8"/><path d="M1219.0 385.4 L1221.8 406.8 L1232.0 402.0 Z" fill="#a8a8a8"/><path d="M1254.8 358.6 L1255.7 378.2 L1263.0 372.0 Z" fill="#a8a8a8"/><path d="M1297.6 334.6 L1297.6 349.7 L1305.0 345.0 Z" fill="#a8a8a8"/><path d="M1176 469 L1180 503 L1200 497 Z" fill="#b8b8b8"/><path d="M1173 507 L1178 552 M1180 540 L1186 568 M1216 540 L1220 578" stroke="#a4a4a4" stroke-width="1.5" fill="none"/><path d="M1176 510 L1195 520 L1240 528 L1288 542" fill="none" stroke="#b8b8b8" stroke-width="1"/><path d="M1237.4 526 C1236 490 1250 440 1279 405 C1300 382 1330 365 1392.7 344.4 C1420 337 1450 335 1477.4 334.5 L1474.8 382.6 C1440 382 1408 384 1376 392 C1340 402 1305 425 1290 455 C1280 478 1278 500 1288 542 C1270 538 1250 532 1237.4 526 Z" fill="url(#gband)"/><path d="M1477.4 334.5 L1474.8 382.6" stroke="#909090" stroke-width="1.2"/><path d="M1474.8 382.6 C1440 382 1408 384 1376 392 C1340 402 1305 425 1290 455 C1280 478 1278 500 1288 542" fill="none" stroke="#dcdcdc" stroke-width="2.5"/><ellipse cx="1331" cy="386" rx="4.2" ry="4.8" fill="#9a9a9a"/><ellipse cx="1365.2" cy="372" rx="4.2" ry="4.8" fill="#9a9a9a"/><ellipse cx="1403.5" cy="361.2" rx="4.2" ry="4.8" fill="#9a9a9a"/><ellipse cx="1443.6" cy="356.8" rx="4.2" ry="4.8" fill="#9a9a9a"/><ellipse cx="1302" cy="406" rx="4.2" ry="4.8" fill="#9a9a9a"/><ellipse cx="1280" cy="431" rx="4.2" ry="4.8" fill="#9a9a9a"/><ellipse cx="1262" cy="456" rx="3.6" ry="4" fill="#9a9a9a"/><ellipse cx="1263" cy="456.5" rx="2.6" ry="2.8" fill="#ffffff"/><ellipse cx="1257" cy="484" rx="3.6" ry="4" fill="#9a9a9a"/><ellipse cx="1258" cy="484.5" rx="2.6" ry="2.8" fill="#ffffff"/><ellipse cx="1259" cy="513" rx="3.6" ry="4" fill="#9a9a9a"/><ellipse cx="1260" cy="513.5" rx="2.6" ry="2.8" fill="#ffffff"/><defs><linearGradient id="chan" x1="0" y1="0" x2="1" y2="0"><stop offset="0" stop-color="#d2d6da"/><stop offset="0.4" stop-color="#ffffff"/><stop offset="1" stop-color="#f4f6f8"/></linearGradient><linearGradient id="bin2" x1="0" y1="1" x2="1" y2="0"><stop offset="0" stop-color="#dfe2e4"/><stop offset="0.55" stop-color="#d6d9dc"/><stop offset="0.8" stop-color="#e8eaec"/><stop offset="1" stop-color="#fbfcfd"/></linearGradient></defs><path d="M1493.5 632.2 L1668.5 423.2 L1682.0 409.8 L1711.3 425.8 L1791.5 457.0 L1800.4 465.0 L1829.0 535.5 L1830.0 545.0 L1684.5 733.7 L1676.5 739.0 L1556.3 763.0 L1545.6 761.7 L1441.4 704.3 L1436.0 695.0 L1438.7 687.0 L1449.4 676.3 L1449.4 665.6 L1458.7 658.9 L1458.7 645.5 L1476.0 626.8 Z" fill="#e5e9ec"/><path d="M1436 695 L1441.4 704.3 L1545.6 761.7 L1556.3 763 L1676.5 739 L1684.5 733.7 L1830 545 L1829 535.5 L1797 538.8 L1787 575.6 L1767.5 600 L1738 641.8 L1713.5 673.6 L1694 700 L1650 714 L1558 734 L1480 694 Z" fill="#eef3f7"/><path d="M1441.4 704.3 L1545.6 761.7 L1556.3 763 L1676.5 739 L1684.5 733.7 L1830 545" fill="none" stroke="#cfd4dc" stroke-width="2"/><path d="M1750.0 458.0 C1755.4 459.6 1774.8 460.7 1782.6 467.7 C1790.4 474.7 1794.6 488.1 1797.0 500.0 C1799.4 511.9 1798.7 526.2 1797.0 538.8 C1795.3 551.4 1791.9 565.4 1787.0 575.6 C1782.1 585.8 1775.7 589.0 1767.5 600.0 C1759.3 611.0 1747.0 629.5 1738.0 641.8 C1729.0 654.1 1720.8 663.9 1713.5 673.6 C1706.2 683.3 1704.6 693.3 1694.0 700.0 C1683.4 706.7 1672.7 708.3 1650.0 714.0 C1627.3 719.7 1586.3 737.3 1558.0 734.0 C1529.7 730.7 1493.0 700.7 1480.0 694.0 L1478 693 " fill="none"/><path d="M1750.0 458.0 C1755.4 459.6 1774.8 460.7 1782.6 467.7 C1790.4 474.7 1794.6 488.1 1797.0 500.0 C1799.4 511.9 1798.7 526.2 1797.0 538.8 C1795.3 551.4 1791.9 565.4 1787.0 575.6 C1782.1 585.8 1775.7 589.0 1767.5 600.0 C1759.3 611.0 1747.0 629.5 1738.0 641.8 C1729.0 654.1 1720.8 663.9 1713.5 673.6 C1706.2 683.3 1704.6 693.3 1694.0 700.0 C1683.4 706.7 1672.7 708.3 1650.0 714.0 C1627.3 719.7 1586.3 737.3 1558.0 734.0 C1529.7 730.7 1493.0 700.7 1480.0 694.0 L1478.0 693.0  C1490.0 693.7 1528.0 697.8 1550.0 697.0 C1572.0 696.2 1593.3 692.2 1610.0 688.0 C1626.7 683.8 1638.5 678.7 1650.0 672.0 C1661.5 665.3 1670.5 656.3 1679.0 648.0 C1687.5 639.7 1693.8 630.7 1701.0 622.0 C1708.2 613.3 1715.2 604.7 1722.0 596.0 C1728.8 587.3 1736.3 578.0 1742.0 570.0 C1747.7 562.0 1752.6 555.7 1756.0 548.0 C1759.4 540.3 1761.5 532.3 1762.5 524.0 C1763.5 515.7 1763.4 506.2 1762.0 498.0 C1760.6 489.8 1755.3 478.8 1754.0 475.0 Z" fill="#f9fbfc"/><defs><clipPath id="chclip"><path d="M1750.0 458.0 C1755.4 459.6 1774.8 460.7 1782.6 467.7 C1790.4 474.7 1794.6 488.1 1797.0 500.0 C1799.4 511.9 1798.7 526.2 1797.0 538.8 C1795.3 551.4 1791.9 565.4 1787.0 575.6 C1782.1 585.8 1775.7 589.0 1767.5 600.0 C1759.3 611.0 1747.0 629.5 1738.0 641.8 C1729.0 654.1 1720.8 663.9 1713.5 673.6 C1706.2 683.3 1704.6 693.3 1694.0 700.0 C1683.4 706.7 1672.7 708.3 1650.0 714.0 C1627.3 719.7 1586.3 737.3 1558.0 734.0 C1529.7 730.7 1493.0 700.7 1480.0 694.0 L1478.0 693.0  C1490.0 693.7 1528.0 697.8 1550.0 697.0 C1572.0 696.2 1593.3 692.2 1610.0 688.0 C1626.7 683.8 1638.5 678.7 1650.0 672.0 C1661.5 665.3 1670.5 656.3 1679.0 648.0 C1687.5 639.7 1693.8 630.7 1701.0 622.0 C1708.2 613.3 1715.2 604.7 1722.0 596.0 C1728.8 587.3 1736.3 578.0 1742.0 570.0 C1747.7 562.0 1752.6 555.7 1756.0 548.0 C1759.4 540.3 1761.5 532.3 1762.5 524.0 C1763.5 515.7 1763.4 506.2 1762.0 498.0 C1760.6 489.8 1755.3 478.8 1754.0 475.0 Z"/></clipPath><linearGradient id="band1" x1="0" y1="0" x2="1" y2="0"><stop offset="0" stop-color="#c8ccd1" stop-opacity="0"/><stop offset="0.5" stop-color="#c8ccd1"/><stop offset="1" stop-color="#c8ccd1" stop-opacity="0"/></linearGradient></defs><g clip-path="url(#chclip)"><path d="M1745 450 L1800 470 L1800 505 L1750 490 Z" fill="#ccd0d4" opacity="0.8"/><path d="M1700 600 L1790 575 L1800 600 L1715 625 Z" fill="#d0d4d8" opacity="0.6"/><path d="M1640 680 L1700 665 L1710 690 L1650 705 Z" fill="#d4d8dc" opacity="0.5"/></g><path d="M1750.0 458.0 C1755.4 459.6 1774.8 460.7 1782.6 467.7 C1790.4 474.7 1794.6 488.1 1797.0 500.0 C1799.4 511.9 1798.7 526.2 1797.0 538.8 C1795.3 551.4 1791.9 565.4 1787.0 575.6 C1782.1 585.8 1775.7 589.0 1767.5 600.0 C1759.3 611.0 1747.0 629.5 1738.0 641.8 C1729.0 654.1 1720.8 663.9 1713.5 673.6 C1706.2 683.3 1704.6 693.3 1694.0 700.0 C1683.4 706.7 1672.7 708.3 1650.0 714.0 C1627.3 719.7 1586.3 737.3 1558.0 734.0 C1529.7 730.7 1493.0 700.7 1480.0 694.0" fill="none" stroke="#c4c9ce" stroke-width="1.3"/><path d="M1449.4 665.6 L1450 684 L1478.0 693.0 C1490.0 693.7 1528.0 697.8 1550.0 697.0 C1572.0 696.2 1593.3 692.2 1610.0 688.0 C1626.7 683.8 1638.5 678.7 1650.0 672.0 C1661.5 665.3 1670.5 656.3 1679.0 648.0 C1687.5 639.7 1693.8 630.7 1701.0 622.0 C1708.2 613.3 1715.2 604.7 1722.0 596.0 C1728.8 587.3 1736.3 578.0 1742.0 570.0 C1747.7 562.0 1752.6 555.7 1756.0 548.0 C1759.4 540.3 1761.5 532.3 1762.5 524.0 C1763.5 515.7 1763.4 506.2 1762.0 498.0 C1760.6 489.8 1755.3 478.8 1754.0 475.0 L1747.0 457.0 C1748.0 464.1 1752.5 488.8 1752.7 499.6 C1752.9 510.4 1750.8 514.4 1748.0 522.0 C1745.2 529.6 1741.8 536.5 1736.0 545.0 C1730.2 553.5 1721.2 563.8 1713.5 573.0 C1705.8 582.2 1698.1 590.8 1690.0 600.0 C1681.9 609.2 1673.7 619.7 1665.0 628.0 C1656.3 636.3 1648.8 643.5 1638.0 650.0 C1627.2 656.5 1614.7 662.5 1600.0 667.0 C1585.3 671.5 1566.7 675.8 1550.0 677.0 C1533.3 678.2 1516.7 676.0 1500.0 674.0 C1483.3 672.0 1458.3 666.5 1450.0 665.0 Z" fill="#dde1e4"/><path d="M1478.0 693.0 C1490.0 693.7 1528.0 697.8 1550.0 697.0 C1572.0 696.2 1593.3 692.2 1610.0 688.0 C1626.7 683.8 1638.5 678.7 1650.0 672.0 C1661.5 665.3 1670.5 656.3 1679.0 648.0 C1687.5 639.7 1693.8 630.7 1701.0 622.0 C1708.2 613.3 1715.2 604.7 1722.0 596.0 C1728.8 587.3 1736.3 578.0 1742.0 570.0 C1747.7 562.0 1752.6 555.7 1756.0 548.0 C1759.4 540.3 1761.5 532.3 1762.5 524.0 C1763.5 515.7 1763.4 506.2 1762.0 498.0 C1760.6 489.8 1755.3 478.8 1754.0 475.0" fill="none" stroke="#c8cdd2" stroke-width="1.4"/><path d="M1747.0 457.0 C1748.0 464.1 1752.5 488.8 1752.7 499.6 C1752.9 510.4 1750.8 514.4 1748.0 522.0 C1745.2 529.6 1741.8 536.5 1736.0 545.0 C1730.2 553.5 1721.2 563.8 1713.5 573.0 C1705.8 582.2 1698.1 590.8 1690.0 600.0 C1681.9 609.2 1673.7 619.7 1665.0 628.0 C1656.3 636.3 1648.8 643.5 1638.0 650.0 C1627.2 656.5 1614.7 662.5 1600.0 667.0 C1585.3 671.5 1566.7 675.8 1550.0 677.0 C1533.3 678.2 1516.7 676.0 1500.0 674.0 C1483.3 672.0 1458.3 666.5 1450.0 665.0" fill="none" stroke="#eef1f3" stroke-width="1.5"/><path d="M1458.7 645.5 L1476 626.8 L1493.5 632.2 L1550 640 L1610 632 L1650 616 L1693.5 546 L1722 507 L1723.8 485.6 L1715 462.4 L1693.5 439 L1668.5 425 L1682 409.8 L1711.3 425.8 L1747.0 457.0 C1748.0 464.1 1752.5 488.8 1752.7 499.6 C1752.9 510.4 1750.8 514.4 1748.0 522.0 C1745.2 529.6 1741.8 536.5 1736.0 545.0 C1730.2 553.5 1721.2 563.8 1713.5 573.0 C1705.8 582.2 1698.1 590.8 1690.0 600.0 C1681.9 609.2 1673.7 619.7 1665.0 628.0 C1656.3 636.3 1648.8 643.5 1638.0 650.0 C1627.2 656.5 1614.7 662.5 1600.0 667.0 C1585.3 671.5 1566.7 675.8 1550.0 677.0 C1533.3 678.2 1516.7 676.0 1500.0 674.0 C1483.3 672.0 1458.3 666.5 1450.0 665.0 L1459 654 Z" fill="#e7eaed"/><path d="M1747.0 457.0 C1747.5 462.5 1750.5 479.5 1750.0 490.0 C1749.5 500.5 1747.7 510.3 1744.0 520.0 C1740.3 529.7 1734.5 538.5 1728.0 548.0 C1721.5 557.5 1713.0 567.5 1705.0 577.0 C1697.0 586.5 1688.3 596.2 1680.0 605.0 C1671.7 613.8 1664.2 622.8 1655.0 630.0 C1645.8 637.2 1635.8 643.3 1625.0 648.0 C1614.2 652.7 1602.5 655.5 1590.0 658.0 C1577.5 660.5 1564.2 662.5 1550.0 663.0 C1535.8 663.5 1520.2 662.5 1505.0 661.0 C1489.8 659.5 1466.7 655.2 1459.0 654.0" fill="none" stroke="#d0d4d8" stroke-width="1.6"/><path d="M1458.7 645.5 L1459 654 M1449.4 665.6 L1449.4 676.3" stroke="#d0d4d8" stroke-width="1.5"/><path d="M1493.5 632.2 L1668.5 425 C1680 428 1700 445 1715 462.4 C1722 472 1725 490 1722 507 C1718 518 1712 526 1709.5 528.3 C1700 540 1690 556 1680 570 C1670 585 1660 605 1650 616 C1630 626 1610 632 1550 640 C1530 640 1510 636 1493.5 632.2 Z" fill="url(#bin2)"/><ellipse cx="1690" cy="478" rx="30" ry="55" transform="rotate(28 1690 478)" fill="url(#bhl2)"/><path d="M1668.5 425 C1680 428 1700 445 1715 462.4 C1722 472 1725 490 1722 507 C1718 518 1712 526 1709.5 528.3 C1700 540 1690 556 1680 570 C1670 585 1660 605 1650 616 C1630 626 1610 632 1550 640 C1530 640 1510 636 1493.5 632.2" fill="none" stroke="#c6cacf" stroke-width="1.3"/><ellipse cx="1683.7" cy="420.5" rx="5.6" ry="4" fill="#c4c8cc"/><ellipse cx="1684.1000000000001" cy="421.6" rx="4.2" ry="2.7" fill="#f6f8fa"/><ellipse cx="1710.4" cy="436.5" rx="5.6" ry="4" fill="#c4c8cc"/><ellipse cx="1710.8000000000002" cy="437.6" rx="4.2" ry="2.7" fill="#f6f8fa"/><ellipse cx="1729" cy="457" rx="5.6" ry="4" fill="#c4c8cc"/><ellipse cx="1729.4" cy="458.1" rx="4.2" ry="2.7" fill="#f6f8fa"/><ellipse cx="1738" cy="480" rx="5.6" ry="4" fill="#c4c8cc"/><ellipse cx="1738.4" cy="481.1" rx="4.2" ry="2.7" fill="#f6f8fa"/><ellipse cx="1738" cy="503.4" rx="5.6" ry="4" fill="#c4c8cc"/><ellipse cx="1738.4" cy="504.5" rx="4.2" ry="2.7" fill="#f6f8fa"/><ellipse cx="1726" cy="525.7" rx="5.6" ry="4" fill="#c4c8cc"/><ellipse cx="1726.4" cy="526.8000000000001" rx="4.2" ry="2.7" fill="#f6f8fa"/><ellipse cx="1707" cy="545.3" rx="5.6" ry="4" fill="#c4c8cc"/><ellipse cx="1707.4" cy="546.4" rx="4.2" ry="2.7" fill="#f6f8fa"/><ellipse cx="1691" cy="566.7" rx="5.6" ry="4" fill="#c4c8cc"/><ellipse cx="1691.4" cy="567.8000000000001" rx="4.2" ry="2.7" fill="#f6f8fa"/><ellipse cx="1672.5" cy="588" rx="5.6" ry="4" fill="#c4c8cc"/><ellipse cx="1672.9" cy="589.1" rx="4.2" ry="2.7" fill="#f6f8fa"/><ellipse cx="1653.8" cy="610.8" rx="5.6" ry="4" fill="#c4c8cc"/><ellipse cx="1654.2" cy="611.9" rx="4.2" ry="2.7" fill="#f6f8fa"/><ellipse cx="1629.7" cy="630.8" rx="5.6" ry="4" fill="#c4c8cc"/><ellipse cx="1630.1000000000001" cy="631.9" rx="4.2" ry="2.7" fill="#f6f8fa"/><ellipse cx="1595" cy="645.5" rx="5.6" ry="4" fill="#c4c8cc"/><ellipse cx="1595.4" cy="646.6" rx="4.2" ry="2.7" fill="#f6f8fa"/><ellipse cx="1556" cy="652" rx="5.6" ry="4" fill="#c4c8cc"/><ellipse cx="1556.4" cy="653.1" rx="4.2" ry="2.7" fill="#f6f8fa"/><ellipse cx="1516" cy="649.5" rx="5.6" ry="4" fill="#c4c8cc"/><ellipse cx="1516.4" cy="650.6" rx="4.2" ry="2.7" fill="#f6f8fa"/><ellipse cx="1477.4" cy="639" rx="5.6" ry="4" fill="#c4c8cc"/><ellipse cx="1477.8000000000002" cy="640.1" rx="4.2" ry="2.7" fill="#f6f8fa"/></svg>
</body></html>
